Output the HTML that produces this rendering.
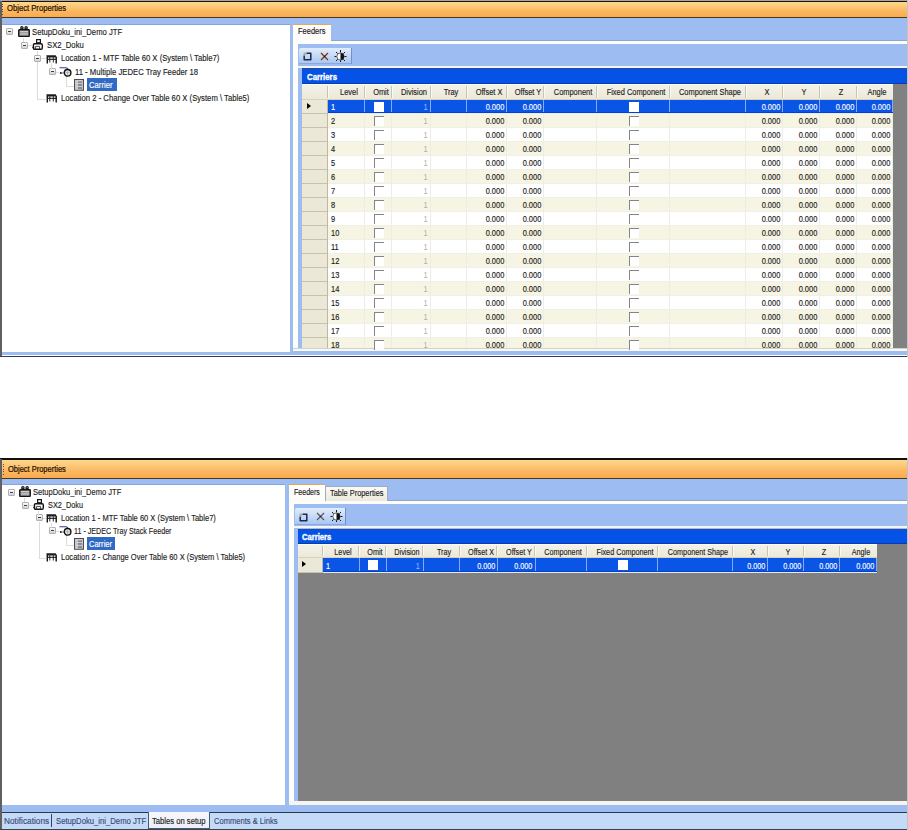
<!DOCTYPE html><html><head><meta charset="utf-8"><style>
*{margin:0;padding:0;box-sizing:content-box}
html,body{width:908px;height:830px;overflow:hidden;background:#fff}
body{position:relative;font-family:"Liberation Sans", sans-serif}
div,span{position:absolute}
svg{position:absolute;left:0;top:0;overflow:visible}
.t{white-space:nowrap;-webkit-text-stroke:0.14px currentColor}
</style></head><body><div style="left:0px;top:0px;width:907px;height:1px;background:#a9a6a6"></div>
<div style="left:0px;top:1px;width:2px;height:356px;background:#606062"></div>
<div style="left:2px;top:1px;width:905px;height:1px;background:#1c1408"></div>
<div style="left:2px;top:2px;width:905px;height:15px;background:linear-gradient(#fdd88c,#fcc878 30%,#fbb862 60%,#fbaa4e)"></div>
<div style="left:2px;top:4.0px;width:1px;height:1px;background:#6a5030"></div>
<div style="left:2px;top:6.4px;width:1px;height:1px;background:#6a5030"></div>
<div style="left:2px;top:8.8px;width:1px;height:1px;background:#6a5030"></div>
<div style="left:2px;top:11.2px;width:1px;height:1px;background:#6a5030"></div>
<div style="left:2px;top:13.6px;width:1px;height:1px;background:#6a5030"></div>
<span class="t" style="left:6.80px;top:3.00px;font-size:8.5px;line-height:10px;color:#1e1200;transform:scaleX(0.9);transform-origin:0 0;-webkit-text-stroke:0.22px #1e1200">Object Properties</span>
<div style="left:2px;top:17px;width:905px;height:1px;background:#4a3a22"></div>
<div style="left:2px;top:18px;width:905px;height:337px;background:#9dbdf2"></div>
<div style="left:0px;top:355.5px;width:907px;height:1.5px;background:#343c52"></div>
<div style="left:2px;top:25px;width:288px;height:327px;background:#fff"></div>
<div style="left:2px;top:24px;width:288px;height:1px;background:#86a4d6"></div>
<div style="left:6.3px;top:28.299999999999997px;width:5px;height:5px;border:1px solid #b0b0b4;border-radius:1px;background:linear-gradient(#fcfcfc,#d4d4d8)"><div style="left:1px;top:2px;width:3px;height:1px;background:#3c3c48"></div></div>
<div style="left:17.8px;top:25.999999999999996px;width:12px;height:11px"><svg width="12" height="11" viewBox="0 0 12 11"><circle cx="3.9" cy="1.9" r="1.8" fill="#1a1a1a"/><circle cx="8.1" cy="1.9" r="1.8" fill="#1a1a1a"/><circle cx="3.9" cy="1.6" r="0.6" fill="#999"/><circle cx="8.1" cy="1.6" r="0.6" fill="#999"/><rect x="0.75" y="3.75" width="10.5" height="6.6" rx="0.6" fill="#9a9a9a" stroke="#141414" stroke-width="1.4"/><path d="M2 5.6 H10 M2 8 H10" stroke="#d8d8d8" stroke-width="0.9"/></svg></div>
<span class="t" style="left:32.40px;top:27.00px;font-size:8.5px;line-height:10px;color:#1c1c1c;transform:scaleX(0.905);transform-origin:0 0;">SetupDoku_ini_Demo JTF</span>
<div style="left:20.5px;top:41.559999999999995px;width:5px;height:5px;border:1px solid #b0b0b4;border-radius:1px;background:linear-gradient(#fcfcfc,#d4d4d8)"><div style="left:1px;top:2px;width:3px;height:1px;background:#3c3c48"></div></div>
<div style="left:32.4px;top:39.059999999999995px;width:11px;height:11px"><svg width="11" height="11" viewBox="0 0 11 11"><rect x="4.6" y="0.6" width="3.8" height="3.2" fill="#fff" stroke="#151515" stroke-width="1.2"/><path d="M6.5 3.5 V5" stroke="#151515" stroke-width="1.2"/><rect x="1.4" y="4.7" width="8.9" height="5.6" rx="1.2" fill="#fff" stroke="#151515" stroke-width="1.4"/><path d="M3.6 10 V7.4 H7.6 V10" fill="none" stroke="#333" stroke-width="0.9"/><path d="M0 8.6 L2.2 7 V10.2Z" fill="#151515"/></svg></div>
<span class="t" style="left:47.00px;top:40.00px;font-size:8.5px;line-height:10px;color:#1c1c1c;transform:scaleX(0.905);transform-origin:0 0;">SX2_Doku</span>
<div style="left:34.3px;top:54.81999999999999px;width:5px;height:5px;border:1px solid #b0b0b4;border-radius:1px;background:linear-gradient(#fcfcfc,#d4d4d8)"><div style="left:1px;top:2px;width:3px;height:1px;background:#3c3c48"></div></div>
<div style="left:45.9px;top:54.519999999999996px;width:12px;height:9px"><svg width="12" height="9" viewBox="0 0 12 9"><path d="M0.3 0.3 H9.6 L11 2.5 H0.8Z" fill="#1c1c1c"/><path d="M1.3 2 V8.5 M10.2 2 V8.5" stroke="#151515" stroke-width="1.4"/><path d="M3.8 2.2 V7.5 M7.3 2.2 V7.5" stroke="#2a2a2a" stroke-width="1"/><path d="M1.3 4.3 H10.2" stroke="#151515" stroke-width="1.1"/></svg></div>
<span class="t" style="left:60.80px;top:53.00px;font-size:8.5px;line-height:10px;color:#1c1c1c;transform:scaleX(0.905);transform-origin:0 0;">Location 1 - MTF Table 60 X (System \ Table7)</span>
<div style="left:48.9px;top:68.08px;width:5px;height:5px;border:1px solid #b0b0b4;border-radius:1px;background:linear-gradient(#fcfcfc,#d4d4d8)"><div style="left:1px;top:2px;width:3px;height:1px;background:#3c3c48"></div></div>
<div style="left:58.8px;top:67.08px;width:13px;height:10px"><svg width="13" height="10" viewBox="0 0 13 10"><path d="M0.5 0.8 H6.5 Q8 0.8 8.8 2" fill="none" stroke="#2a3a88" stroke-width="1.1"/><circle cx="1.8" cy="6" r="1" fill="#151515"/><path d="M2.5 6 H5" stroke="#555" stroke-width="0.8"/><circle cx="8.6" cy="5.8" r="3.3" fill="#eee" stroke="#111" stroke-width="1.4"/><path d="M8.6 3.6 V8 M6.4 5.8 H10.8" stroke="#888" stroke-width="0.6"/></svg></div>
<span class="t" style="left:74.60px;top:67.00px;font-size:8.5px;line-height:10px;color:#1c1c1c;transform:scaleX(0.905);transform-origin:0 0;">11 - Multiple JEDEC Tray Feeder 18</span>
<div style="left:74.1px;top:79.34px;width:10px;height:12px"><svg width="10" height="12" viewBox="0 0 10 12"><rect x="0.6" y="0.6" width="8.8" height="10.6" fill="#f2f2f2" stroke="#4c4c4c" stroke-width="1.2"/><rect x="1.2" y="1.2" width="2" height="9.4" fill="#c8c8c8"/><rect x="3.6" y="2.2" width="4.6" height="2.2" fill="#8a8a98"/><rect x="3.6" y="5" width="4.6" height="2.2" fill="#8a8a98"/><rect x="3.6" y="7.8" width="4.6" height="2.2" fill="#8a8a98"/></svg></div>
<div style="left:87px;top:78.34px;width:29.5px;height:13px;background:#316ac5"></div>
<span class="t" style="left:89.00px;top:80.00px;font-size:8.5px;line-height:10px;color:#fff;transform:scaleX(0.905);transform-origin:0 0;">Carrier</span>
<div style="left:45.9px;top:94.3px;width:12px;height:9px"><svg width="12" height="9" viewBox="0 0 12 9"><path d="M0.3 0.3 H9.6 L11 2.5 H0.8Z" fill="#1c1c1c"/><path d="M1.3 2 V8.5 M10.2 2 V8.5" stroke="#151515" stroke-width="1.4"/><path d="M3.8 2.2 V7.5 M7.3 2.2 V7.5" stroke="#2a2a2a" stroke-width="1"/><path d="M1.3 4.3 H10.2" stroke="#151515" stroke-width="1.1"/></svg></div>
<span class="t" style="left:60.80px;top:93.00px;font-size:8.5px;line-height:10px;color:#1c1c1c;transform:scaleX(0.905);transform-origin:0 0;">Location 2 - Change Over Table 60 X (System \ Table5)</span>
<div style="left:23.3px;top:37.5px;width:1px;height:4.0px;background:#dcdcdc"></div>
<div style="left:27.5px;top:45px;width:4.899999999999999px;height:1px;background:#dcdcdc"></div>
<div style="left:37.4px;top:50.5px;width:1px;height:4.0px;background:#dcdcdc"></div>
<div style="left:37.3px;top:61.5px;width:1px;height:37.5px;background:#dcdcdc"></div>
<div style="left:41.3px;top:58px;width:4.600000000000001px;height:1px;background:#dcdcdc"></div>
<div style="left:37.3px;top:99px;width:8.600000000000001px;height:1px;background:#dcdcdc"></div>
<div style="left:51.4px;top:62.5px;width:1px;height:6.0px;background:#dcdcdc"></div>
<div style="left:55.9px;top:72px;width:2.8999999999999986px;height:1px;background:#dcdcdc"></div>
<div style="left:65.8px;top:76.5px;width:1px;height:9.5px;background:#dcdcdc"></div>
<div style="left:65.8px;top:86px;width:8.299999999999997px;height:1px;background:#dcdcdc"></div>
<div style="left:293px;top:24px;width:38px;height:17px;background:linear-gradient(#fff,#fcfbf7);border-top:1px solid #eaa84e;box-sizing:border-box"></div>
<span class="t" style="left:297.80px;top:26.00px;font-size:8.5px;line-height:10px;color:#1a1a1a;transform:scaleX(0.88);transform-origin:0 0;">Feeders</span>
<div style="left:331px;top:39.5px;width:576px;height:1.5px;background:#8ea6cc"></div>
<div style="left:293px;top:41px;width:614px;height:3px;background:#fdfdfb"></div>
<div style="left:293px;top:41px;width:5px;height:309px;background:#fdfdfb"></div>
<div style="left:293px;top:348px;width:614px;height:3px;background:linear-gradient(#d4d2c8 0,#d4d2c8 1px,#f8f8f4 1px)"></div>
<div style="left:298.5px;top:47.5px;width:53px;height:16.7px;background:linear-gradient(#e2ecfc,#c2d6f6 60%,#aac6f2);border-right:1px solid #6f8fcf;border-bottom:1px solid #8aa8dc;border-top-left-radius:2px;box-sizing:border-box"></div>
<div style="left:303.0px;top:52.3px;width:9px;height:9px"><svg width="9" height="9" viewBox="0 0 9 9"><path d="M1.2 3.5 V7.8 H7.8 V1.2 H3.5" fill="none" stroke="#1c2a48" stroke-width="1.5" stroke-linejoin="round"/><path d="M0.5 0.5 H3.2 V3.2 H0.5Z" fill="#a8b4a0"/></svg></div>
<div style="left:320.0px;top:52.0px;width:9px;height:9px"><svg width="9" height="9" viewBox="0 0 9 9"><path d="M1 1 L8 8 M8 1 L1 8" stroke="#7a3818" stroke-width="1.3"/><circle cx="4.5" cy="4.5" r="0.8" fill="#3a1808"/></svg></div>
<div style="left:333.7px;top:49.7px;width:12px;height:12px"><svg width="12" height="12" viewBox="0 0 12 12"><path d="M6.5 0 V2.2 M6.5 10.3 V12 M0.5 6.5 H2.5 M10.5 6.5 H12.5 M2 2 L3.6 3.6 M9.4 9.4 L11 11 M11 2 L9.4 3.6 M3.6 9.4 L2 11" stroke="#15151f" stroke-width="1"/><circle cx="6.5" cy="6.5" r="3.6" fill="#fff" stroke="#111" stroke-width="0.6"/><path d="M6.5 2.9 A3.6 3.6 0 0 1 6.5 10.1Z" fill="#111"/></svg></div>
<div style="left:298px;top:65.7px;width:609px;height:2.3px;background:#f2f6fc"></div>
<div style="left:302px;top:68px;width:605px;height:16px;background:#0553e6"></div>
<div style="left:302px;top:68px;width:605px;height:1px;background:#2a4a9a"></div>
<div style="left:302px;top:83px;width:605px;height:1px;background:#0a3cb0"></div>
<span class="t" style="left:306.50px;top:72.00px;font-size:8.5px;line-height:10px;color:#fff;transform:scaleX(0.92);transform-origin:0 0;font-weight:bold;-webkit-text-stroke:0.35px #fff">Carriers</span>
<div style="left:302px;top:84px;width:591px;height:15.5px;background:linear-gradient(#f4f2e8,#ebe8d8);border-top:1px solid #fbfaf4;box-sizing:border-box"></div>
<div style="left:326.5px;top:86px;width:1px;height:11.5px;background:#c9c4ae"></div>
<div style="left:327.5px;top:86px;width:1px;height:11.5px;background:#faf9f2"></div>
<div style="left:363.5px;top:86px;width:1px;height:11.5px;background:#c9c4ae"></div>
<div style="left:364.5px;top:86px;width:1px;height:11.5px;background:#faf9f2"></div>
<span class="t" style="left:248.50px;width:200px;text-align:center;top:87.00px;font-size:8.5px;line-height:10px;color:#1c1c1c;transform:scaleX(0.875);transform-origin:50% 0;">Level</span>
<div style="left:390.5px;top:86px;width:1px;height:11.5px;background:#c9c4ae"></div>
<div style="left:391.5px;top:86px;width:1px;height:11.5px;background:#faf9f2"></div>
<span class="t" style="left:280.50px;width:200px;text-align:center;top:87.00px;font-size:8.5px;line-height:10px;color:#1c1c1c;transform:scaleX(0.875);transform-origin:50% 0;">Omit</span>
<div style="left:429.5px;top:86px;width:1px;height:11.5px;background:#c9c4ae"></div>
<div style="left:430.5px;top:86px;width:1px;height:11.5px;background:#faf9f2"></div>
<span class="t" style="left:313.50px;width:200px;text-align:center;top:87.00px;font-size:8.5px;line-height:10px;color:#1c1c1c;transform:scaleX(0.875);transform-origin:50% 0;">Division</span>
<div style="left:465.5px;top:86px;width:1px;height:11.5px;background:#c9c4ae"></div>
<div style="left:466.5px;top:86px;width:1px;height:11.5px;background:#faf9f2"></div>
<span class="t" style="left:351.00px;width:200px;text-align:center;top:87.00px;font-size:8.5px;line-height:10px;color:#1c1c1c;transform:scaleX(0.875);transform-origin:50% 0;">Tray</span>
<div style="left:505.5px;top:86px;width:1px;height:11.5px;background:#c9c4ae"></div>
<div style="left:506.5px;top:86px;width:1px;height:11.5px;background:#faf9f2"></div>
<span class="t" style="left:389.00px;width:200px;text-align:center;top:87.00px;font-size:8.5px;line-height:10px;color:#1c1c1c;transform:scaleX(0.875);transform-origin:50% 0;">Offset X</span>
<div style="left:542.5px;top:86px;width:1px;height:11.5px;background:#c9c4ae"></div>
<div style="left:543.5px;top:86px;width:1px;height:11.5px;background:#faf9f2"></div>
<span class="t" style="left:427.50px;width:200px;text-align:center;top:87.00px;font-size:8.5px;line-height:10px;color:#1c1c1c;transform:scaleX(0.875);transform-origin:50% 0;">Offset Y</span>
<div style="left:595.5px;top:86px;width:1px;height:11.5px;background:#c9c4ae"></div>
<div style="left:596.5px;top:86px;width:1px;height:11.5px;background:#faf9f2"></div>
<span class="t" style="left:472.50px;width:200px;text-align:center;top:87.00px;font-size:8.5px;line-height:10px;color:#1c1c1c;transform:scaleX(0.875);transform-origin:50% 0;">Component</span>
<div style="left:668.5px;top:86px;width:1px;height:11.5px;background:#c9c4ae"></div>
<div style="left:669.5px;top:86px;width:1px;height:11.5px;background:#faf9f2"></div>
<span class="t" style="left:535.50px;width:200px;text-align:center;top:87.00px;font-size:8.5px;line-height:10px;color:#1c1c1c;transform:scaleX(0.875);transform-origin:50% 0;">Fixed Component</span>
<div style="left:744.5px;top:86px;width:1px;height:11.5px;background:#c9c4ae"></div>
<div style="left:745.5px;top:86px;width:1px;height:11.5px;background:#faf9f2"></div>
<span class="t" style="left:610.00px;width:200px;text-align:center;top:87.00px;font-size:8.5px;line-height:10px;color:#1c1c1c;transform:scaleX(0.875);transform-origin:50% 0;">Component Shape</span>
<div style="left:781.5px;top:86px;width:1px;height:11.5px;background:#c9c4ae"></div>
<div style="left:782.5px;top:86px;width:1px;height:11.5px;background:#faf9f2"></div>
<span class="t" style="left:666.50px;width:200px;text-align:center;top:87.00px;font-size:8.5px;line-height:10px;color:#1c1c1c;transform:scaleX(0.875);transform-origin:50% 0;">X</span>
<div style="left:818.5px;top:86px;width:1px;height:11.5px;background:#c9c4ae"></div>
<div style="left:819.5px;top:86px;width:1px;height:11.5px;background:#faf9f2"></div>
<span class="t" style="left:703.50px;width:200px;text-align:center;top:87.00px;font-size:8.5px;line-height:10px;color:#1c1c1c;transform:scaleX(0.875);transform-origin:50% 0;">Y</span>
<div style="left:855.5px;top:86px;width:1px;height:11.5px;background:#c9c4ae"></div>
<div style="left:856.5px;top:86px;width:1px;height:11.5px;background:#faf9f2"></div>
<span class="t" style="left:740.50px;width:200px;text-align:center;top:87.00px;font-size:8.5px;line-height:10px;color:#1c1c1c;transform:scaleX(0.875);transform-origin:50% 0;">Z</span>
<span class="t" style="left:777.00px;width:200px;text-align:center;top:87.00px;font-size:8.5px;line-height:10px;color:#1c1c1c;transform:scaleX(0.875);transform-origin:50% 0;">Angle</span>
<div style="left:302px;top:98.5px;width:591px;height:1px;background:#d6d2bc"></div>
<div style="left:302px;top:99.5px;width:26px;height:14px;background:#ebe8d8"></div>
<div style="left:302px;top:112.5px;width:26px;height:1px;background:#c6c2ac"></div>
<div style="left:327px;top:99.5px;width:1px;height:14px;background:#bcb8a4"></div>
<div style="left:306.5px;top:102.5px;width:0;height:0;border-left:4px solid #000;border-top:3.5px solid transparent;border-bottom:3.5px solid transparent"></div>
<div style="left:328px;top:99.5px;width:565px;height:14px;background:#0a54e6"></div>
<div style="left:364px;top:99.5px;width:1px;height:14px;background:#84acf4"></div>
<div style="left:391px;top:99.5px;width:1px;height:14px;background:#84acf4"></div>
<div style="left:430px;top:99.5px;width:1px;height:14px;background:#84acf4"></div>
<div style="left:466px;top:99.5px;width:1px;height:14px;background:#84acf4"></div>
<div style="left:506px;top:99.5px;width:1px;height:14px;background:#84acf4"></div>
<div style="left:543px;top:99.5px;width:1px;height:14px;background:#84acf4"></div>
<div style="left:596px;top:99.5px;width:1px;height:14px;background:#84acf4"></div>
<div style="left:669px;top:99.5px;width:1px;height:14px;background:#84acf4"></div>
<div style="left:745px;top:99.5px;width:1px;height:14px;background:#84acf4"></div>
<div style="left:782px;top:99.5px;width:1px;height:14px;background:#84acf4"></div>
<div style="left:819px;top:99.5px;width:1px;height:14px;background:#84acf4"></div>
<div style="left:856px;top:99.5px;width:1px;height:14px;background:#84acf4"></div>
<div style="left:892px;top:99.5px;width:1px;height:14px;background:#84acf4"></div>
<div style="left:328px;top:111.5px;width:565px;height:1px;background:#0842c4"></div>
<div style="left:328px;top:112.5px;width:565px;height:1px;background:#e4ecfc"></div>
<span class="t" style="left:330.50px;top:102.00px;font-size:8.5px;line-height:10px;color:#fff;transform:scaleX(0.875);transform-origin:0 0;">1</span>
<div style="left:373.5px;top:101.5px;width:10px;height:10px;background:#fff"></div>
<span class="t" style="right:480.50px;top:102.00px;font-size:8.5px;line-height:10px;color:#9cb8f0;transform:scaleX(0.875);transform-origin:100% 0;-webkit-text-stroke:0">1</span>
<span class="t" style="right:404.00px;top:102.00px;font-size:8.5px;line-height:10px;color:#fff;transform:scaleX(0.875);transform-origin:100% 0;">0.000</span>
<span class="t" style="right:367.00px;top:102.00px;font-size:8.5px;line-height:10px;color:#fff;transform:scaleX(0.875);transform-origin:100% 0;">0.000</span>
<div style="left:628.5px;top:101.5px;width:10px;height:10px;background:#fff"></div>
<span class="t" style="right:128.00px;top:102.00px;font-size:8.5px;line-height:10px;color:#fff;transform:scaleX(0.875);transform-origin:100% 0;">0.000</span>
<span class="t" style="right:91.00px;top:102.00px;font-size:8.5px;line-height:10px;color:#fff;transform:scaleX(0.875);transform-origin:100% 0;">0.000</span>
<span class="t" style="right:54.00px;top:102.00px;font-size:8.5px;line-height:10px;color:#fff;transform:scaleX(0.875);transform-origin:100% 0;">0.000</span>
<span class="t" style="right:18.00px;top:102.00px;font-size:8.5px;line-height:10px;color:#fff;transform:scaleX(0.875);transform-origin:100% 0;">0.000</span>
<div style="left:302px;top:113.5px;width:26px;height:14px;background:#ebe8d8"></div>
<div style="left:302px;top:126.5px;width:26px;height:1px;background:#c6c2ac"></div>
<div style="left:327px;top:113.5px;width:1px;height:14px;background:#bcb8a4"></div>
<div style="left:328px;top:113.5px;width:565px;height:14px;background:#f6f4e2"></div>
<div style="left:364px;top:113.5px;width:1px;height:14px;background:#efede2"></div>
<div style="left:391px;top:113.5px;width:1px;height:14px;background:#efede2"></div>
<div style="left:430px;top:113.5px;width:1px;height:14px;background:#efede2"></div>
<div style="left:466px;top:113.5px;width:1px;height:14px;background:#efede2"></div>
<div style="left:506px;top:113.5px;width:1px;height:14px;background:#efede2"></div>
<div style="left:543px;top:113.5px;width:1px;height:14px;background:#efede2"></div>
<div style="left:596px;top:113.5px;width:1px;height:14px;background:#efede2"></div>
<div style="left:669px;top:113.5px;width:1px;height:14px;background:#efede2"></div>
<div style="left:745px;top:113.5px;width:1px;height:14px;background:#efede2"></div>
<div style="left:782px;top:113.5px;width:1px;height:14px;background:#efede2"></div>
<div style="left:819px;top:113.5px;width:1px;height:14px;background:#efede2"></div>
<div style="left:856px;top:113.5px;width:1px;height:14px;background:#efede2"></div>
<div style="left:892px;top:113.5px;width:1px;height:14px;background:#efede2"></div>
<div style="left:328px;top:126.5px;width:565px;height:1px;background:#f2f0e6"></div>
<span class="t" style="left:330.50px;top:116.00px;font-size:8.5px;line-height:10px;color:#1a1a1a;transform:scaleX(0.875);transform-origin:0 0;">2</span>
<div style="left:373.5px;top:115.5px;width:10px;height:10px;border-left:1.6px solid #858585;border-top:1.6px solid #858585;box-sizing:border-box;background:#fff"></div>
<span class="t" style="right:480.50px;top:116.00px;font-size:8.5px;line-height:10px;color:#b0b0b0;transform:scaleX(0.875);transform-origin:100% 0;-webkit-text-stroke:0">1</span>
<span class="t" style="right:404.00px;top:116.00px;font-size:8.5px;line-height:10px;color:#1a1a1a;transform:scaleX(0.875);transform-origin:100% 0;">0.000</span>
<span class="t" style="right:367.00px;top:116.00px;font-size:8.5px;line-height:10px;color:#1a1a1a;transform:scaleX(0.875);transform-origin:100% 0;">0.000</span>
<div style="left:628.5px;top:115.5px;width:10px;height:10px;border-left:1.6px solid #858585;border-top:1.6px solid #858585;box-sizing:border-box;background:#fff"></div>
<span class="t" style="right:128.00px;top:116.00px;font-size:8.5px;line-height:10px;color:#1a1a1a;transform:scaleX(0.875);transform-origin:100% 0;">0.000</span>
<span class="t" style="right:91.00px;top:116.00px;font-size:8.5px;line-height:10px;color:#1a1a1a;transform:scaleX(0.875);transform-origin:100% 0;">0.000</span>
<span class="t" style="right:54.00px;top:116.00px;font-size:8.5px;line-height:10px;color:#1a1a1a;transform:scaleX(0.875);transform-origin:100% 0;">0.000</span>
<span class="t" style="right:18.00px;top:116.00px;font-size:8.5px;line-height:10px;color:#1a1a1a;transform:scaleX(0.875);transform-origin:100% 0;">0.000</span>
<div style="left:302px;top:127.5px;width:26px;height:14px;background:#ebe8d8"></div>
<div style="left:302px;top:140.5px;width:26px;height:1px;background:#c6c2ac"></div>
<div style="left:327px;top:127.5px;width:1px;height:14px;background:#bcb8a4"></div>
<div style="left:328px;top:127.5px;width:565px;height:14px;background:#ffffff"></div>
<div style="left:364px;top:127.5px;width:1px;height:14px;background:#efede2"></div>
<div style="left:391px;top:127.5px;width:1px;height:14px;background:#efede2"></div>
<div style="left:430px;top:127.5px;width:1px;height:14px;background:#efede2"></div>
<div style="left:466px;top:127.5px;width:1px;height:14px;background:#efede2"></div>
<div style="left:506px;top:127.5px;width:1px;height:14px;background:#efede2"></div>
<div style="left:543px;top:127.5px;width:1px;height:14px;background:#efede2"></div>
<div style="left:596px;top:127.5px;width:1px;height:14px;background:#efede2"></div>
<div style="left:669px;top:127.5px;width:1px;height:14px;background:#efede2"></div>
<div style="left:745px;top:127.5px;width:1px;height:14px;background:#efede2"></div>
<div style="left:782px;top:127.5px;width:1px;height:14px;background:#efede2"></div>
<div style="left:819px;top:127.5px;width:1px;height:14px;background:#efede2"></div>
<div style="left:856px;top:127.5px;width:1px;height:14px;background:#efede2"></div>
<div style="left:892px;top:127.5px;width:1px;height:14px;background:#efede2"></div>
<div style="left:328px;top:140.5px;width:565px;height:1px;background:#f2f0e6"></div>
<span class="t" style="left:330.50px;top:130.00px;font-size:8.5px;line-height:10px;color:#1a1a1a;transform:scaleX(0.875);transform-origin:0 0;">3</span>
<div style="left:373.5px;top:129.5px;width:10px;height:10px;border-left:1.6px solid #858585;border-top:1.6px solid #858585;box-sizing:border-box;background:#fff"></div>
<span class="t" style="right:480.50px;top:130.00px;font-size:8.5px;line-height:10px;color:#b0b0b0;transform:scaleX(0.875);transform-origin:100% 0;-webkit-text-stroke:0">1</span>
<span class="t" style="right:404.00px;top:130.00px;font-size:8.5px;line-height:10px;color:#1a1a1a;transform:scaleX(0.875);transform-origin:100% 0;">0.000</span>
<span class="t" style="right:367.00px;top:130.00px;font-size:8.5px;line-height:10px;color:#1a1a1a;transform:scaleX(0.875);transform-origin:100% 0;">0.000</span>
<div style="left:628.5px;top:129.5px;width:10px;height:10px;border-left:1.6px solid #858585;border-top:1.6px solid #858585;box-sizing:border-box;background:#fff"></div>
<span class="t" style="right:128.00px;top:130.00px;font-size:8.5px;line-height:10px;color:#1a1a1a;transform:scaleX(0.875);transform-origin:100% 0;">0.000</span>
<span class="t" style="right:91.00px;top:130.00px;font-size:8.5px;line-height:10px;color:#1a1a1a;transform:scaleX(0.875);transform-origin:100% 0;">0.000</span>
<span class="t" style="right:54.00px;top:130.00px;font-size:8.5px;line-height:10px;color:#1a1a1a;transform:scaleX(0.875);transform-origin:100% 0;">0.000</span>
<span class="t" style="right:18.00px;top:130.00px;font-size:8.5px;line-height:10px;color:#1a1a1a;transform:scaleX(0.875);transform-origin:100% 0;">0.000</span>
<div style="left:302px;top:141.5px;width:26px;height:14px;background:#ebe8d8"></div>
<div style="left:302px;top:154.5px;width:26px;height:1px;background:#c6c2ac"></div>
<div style="left:327px;top:141.5px;width:1px;height:14px;background:#bcb8a4"></div>
<div style="left:328px;top:141.5px;width:565px;height:14px;background:#f6f4e2"></div>
<div style="left:364px;top:141.5px;width:1px;height:14px;background:#efede2"></div>
<div style="left:391px;top:141.5px;width:1px;height:14px;background:#efede2"></div>
<div style="left:430px;top:141.5px;width:1px;height:14px;background:#efede2"></div>
<div style="left:466px;top:141.5px;width:1px;height:14px;background:#efede2"></div>
<div style="left:506px;top:141.5px;width:1px;height:14px;background:#efede2"></div>
<div style="left:543px;top:141.5px;width:1px;height:14px;background:#efede2"></div>
<div style="left:596px;top:141.5px;width:1px;height:14px;background:#efede2"></div>
<div style="left:669px;top:141.5px;width:1px;height:14px;background:#efede2"></div>
<div style="left:745px;top:141.5px;width:1px;height:14px;background:#efede2"></div>
<div style="left:782px;top:141.5px;width:1px;height:14px;background:#efede2"></div>
<div style="left:819px;top:141.5px;width:1px;height:14px;background:#efede2"></div>
<div style="left:856px;top:141.5px;width:1px;height:14px;background:#efede2"></div>
<div style="left:892px;top:141.5px;width:1px;height:14px;background:#efede2"></div>
<div style="left:328px;top:154.5px;width:565px;height:1px;background:#f2f0e6"></div>
<span class="t" style="left:330.50px;top:144.00px;font-size:8.5px;line-height:10px;color:#1a1a1a;transform:scaleX(0.875);transform-origin:0 0;">4</span>
<div style="left:373.5px;top:143.5px;width:10px;height:10px;border-left:1.6px solid #858585;border-top:1.6px solid #858585;box-sizing:border-box;background:#fff"></div>
<span class="t" style="right:480.50px;top:144.00px;font-size:8.5px;line-height:10px;color:#b0b0b0;transform:scaleX(0.875);transform-origin:100% 0;-webkit-text-stroke:0">1</span>
<span class="t" style="right:404.00px;top:144.00px;font-size:8.5px;line-height:10px;color:#1a1a1a;transform:scaleX(0.875);transform-origin:100% 0;">0.000</span>
<span class="t" style="right:367.00px;top:144.00px;font-size:8.5px;line-height:10px;color:#1a1a1a;transform:scaleX(0.875);transform-origin:100% 0;">0.000</span>
<div style="left:628.5px;top:143.5px;width:10px;height:10px;border-left:1.6px solid #858585;border-top:1.6px solid #858585;box-sizing:border-box;background:#fff"></div>
<span class="t" style="right:128.00px;top:144.00px;font-size:8.5px;line-height:10px;color:#1a1a1a;transform:scaleX(0.875);transform-origin:100% 0;">0.000</span>
<span class="t" style="right:91.00px;top:144.00px;font-size:8.5px;line-height:10px;color:#1a1a1a;transform:scaleX(0.875);transform-origin:100% 0;">0.000</span>
<span class="t" style="right:54.00px;top:144.00px;font-size:8.5px;line-height:10px;color:#1a1a1a;transform:scaleX(0.875);transform-origin:100% 0;">0.000</span>
<span class="t" style="right:18.00px;top:144.00px;font-size:8.5px;line-height:10px;color:#1a1a1a;transform:scaleX(0.875);transform-origin:100% 0;">0.000</span>
<div style="left:302px;top:155.5px;width:26px;height:14px;background:#ebe8d8"></div>
<div style="left:302px;top:168.5px;width:26px;height:1px;background:#c6c2ac"></div>
<div style="left:327px;top:155.5px;width:1px;height:14px;background:#bcb8a4"></div>
<div style="left:328px;top:155.5px;width:565px;height:14px;background:#ffffff"></div>
<div style="left:364px;top:155.5px;width:1px;height:14px;background:#efede2"></div>
<div style="left:391px;top:155.5px;width:1px;height:14px;background:#efede2"></div>
<div style="left:430px;top:155.5px;width:1px;height:14px;background:#efede2"></div>
<div style="left:466px;top:155.5px;width:1px;height:14px;background:#efede2"></div>
<div style="left:506px;top:155.5px;width:1px;height:14px;background:#efede2"></div>
<div style="left:543px;top:155.5px;width:1px;height:14px;background:#efede2"></div>
<div style="left:596px;top:155.5px;width:1px;height:14px;background:#efede2"></div>
<div style="left:669px;top:155.5px;width:1px;height:14px;background:#efede2"></div>
<div style="left:745px;top:155.5px;width:1px;height:14px;background:#efede2"></div>
<div style="left:782px;top:155.5px;width:1px;height:14px;background:#efede2"></div>
<div style="left:819px;top:155.5px;width:1px;height:14px;background:#efede2"></div>
<div style="left:856px;top:155.5px;width:1px;height:14px;background:#efede2"></div>
<div style="left:892px;top:155.5px;width:1px;height:14px;background:#efede2"></div>
<div style="left:328px;top:168.5px;width:565px;height:1px;background:#f2f0e6"></div>
<span class="t" style="left:330.50px;top:158.00px;font-size:8.5px;line-height:10px;color:#1a1a1a;transform:scaleX(0.875);transform-origin:0 0;">5</span>
<div style="left:373.5px;top:157.5px;width:10px;height:10px;border-left:1.6px solid #858585;border-top:1.6px solid #858585;box-sizing:border-box;background:#fff"></div>
<span class="t" style="right:480.50px;top:158.00px;font-size:8.5px;line-height:10px;color:#b0b0b0;transform:scaleX(0.875);transform-origin:100% 0;-webkit-text-stroke:0">1</span>
<span class="t" style="right:404.00px;top:158.00px;font-size:8.5px;line-height:10px;color:#1a1a1a;transform:scaleX(0.875);transform-origin:100% 0;">0.000</span>
<span class="t" style="right:367.00px;top:158.00px;font-size:8.5px;line-height:10px;color:#1a1a1a;transform:scaleX(0.875);transform-origin:100% 0;">0.000</span>
<div style="left:628.5px;top:157.5px;width:10px;height:10px;border-left:1.6px solid #858585;border-top:1.6px solid #858585;box-sizing:border-box;background:#fff"></div>
<span class="t" style="right:128.00px;top:158.00px;font-size:8.5px;line-height:10px;color:#1a1a1a;transform:scaleX(0.875);transform-origin:100% 0;">0.000</span>
<span class="t" style="right:91.00px;top:158.00px;font-size:8.5px;line-height:10px;color:#1a1a1a;transform:scaleX(0.875);transform-origin:100% 0;">0.000</span>
<span class="t" style="right:54.00px;top:158.00px;font-size:8.5px;line-height:10px;color:#1a1a1a;transform:scaleX(0.875);transform-origin:100% 0;">0.000</span>
<span class="t" style="right:18.00px;top:158.00px;font-size:8.5px;line-height:10px;color:#1a1a1a;transform:scaleX(0.875);transform-origin:100% 0;">0.000</span>
<div style="left:302px;top:169.5px;width:26px;height:14px;background:#ebe8d8"></div>
<div style="left:302px;top:182.5px;width:26px;height:1px;background:#c6c2ac"></div>
<div style="left:327px;top:169.5px;width:1px;height:14px;background:#bcb8a4"></div>
<div style="left:328px;top:169.5px;width:565px;height:14px;background:#f6f4e2"></div>
<div style="left:364px;top:169.5px;width:1px;height:14px;background:#efede2"></div>
<div style="left:391px;top:169.5px;width:1px;height:14px;background:#efede2"></div>
<div style="left:430px;top:169.5px;width:1px;height:14px;background:#efede2"></div>
<div style="left:466px;top:169.5px;width:1px;height:14px;background:#efede2"></div>
<div style="left:506px;top:169.5px;width:1px;height:14px;background:#efede2"></div>
<div style="left:543px;top:169.5px;width:1px;height:14px;background:#efede2"></div>
<div style="left:596px;top:169.5px;width:1px;height:14px;background:#efede2"></div>
<div style="left:669px;top:169.5px;width:1px;height:14px;background:#efede2"></div>
<div style="left:745px;top:169.5px;width:1px;height:14px;background:#efede2"></div>
<div style="left:782px;top:169.5px;width:1px;height:14px;background:#efede2"></div>
<div style="left:819px;top:169.5px;width:1px;height:14px;background:#efede2"></div>
<div style="left:856px;top:169.5px;width:1px;height:14px;background:#efede2"></div>
<div style="left:892px;top:169.5px;width:1px;height:14px;background:#efede2"></div>
<div style="left:328px;top:182.5px;width:565px;height:1px;background:#f2f0e6"></div>
<span class="t" style="left:330.50px;top:172.00px;font-size:8.5px;line-height:10px;color:#1a1a1a;transform:scaleX(0.875);transform-origin:0 0;">6</span>
<div style="left:373.5px;top:171.5px;width:10px;height:10px;border-left:1.6px solid #858585;border-top:1.6px solid #858585;box-sizing:border-box;background:#fff"></div>
<span class="t" style="right:480.50px;top:172.00px;font-size:8.5px;line-height:10px;color:#b0b0b0;transform:scaleX(0.875);transform-origin:100% 0;-webkit-text-stroke:0">1</span>
<span class="t" style="right:404.00px;top:172.00px;font-size:8.5px;line-height:10px;color:#1a1a1a;transform:scaleX(0.875);transform-origin:100% 0;">0.000</span>
<span class="t" style="right:367.00px;top:172.00px;font-size:8.5px;line-height:10px;color:#1a1a1a;transform:scaleX(0.875);transform-origin:100% 0;">0.000</span>
<div style="left:628.5px;top:171.5px;width:10px;height:10px;border-left:1.6px solid #858585;border-top:1.6px solid #858585;box-sizing:border-box;background:#fff"></div>
<span class="t" style="right:128.00px;top:172.00px;font-size:8.5px;line-height:10px;color:#1a1a1a;transform:scaleX(0.875);transform-origin:100% 0;">0.000</span>
<span class="t" style="right:91.00px;top:172.00px;font-size:8.5px;line-height:10px;color:#1a1a1a;transform:scaleX(0.875);transform-origin:100% 0;">0.000</span>
<span class="t" style="right:54.00px;top:172.00px;font-size:8.5px;line-height:10px;color:#1a1a1a;transform:scaleX(0.875);transform-origin:100% 0;">0.000</span>
<span class="t" style="right:18.00px;top:172.00px;font-size:8.5px;line-height:10px;color:#1a1a1a;transform:scaleX(0.875);transform-origin:100% 0;">0.000</span>
<div style="left:302px;top:183.5px;width:26px;height:14px;background:#ebe8d8"></div>
<div style="left:302px;top:196.5px;width:26px;height:1px;background:#c6c2ac"></div>
<div style="left:327px;top:183.5px;width:1px;height:14px;background:#bcb8a4"></div>
<div style="left:328px;top:183.5px;width:565px;height:14px;background:#ffffff"></div>
<div style="left:364px;top:183.5px;width:1px;height:14px;background:#efede2"></div>
<div style="left:391px;top:183.5px;width:1px;height:14px;background:#efede2"></div>
<div style="left:430px;top:183.5px;width:1px;height:14px;background:#efede2"></div>
<div style="left:466px;top:183.5px;width:1px;height:14px;background:#efede2"></div>
<div style="left:506px;top:183.5px;width:1px;height:14px;background:#efede2"></div>
<div style="left:543px;top:183.5px;width:1px;height:14px;background:#efede2"></div>
<div style="left:596px;top:183.5px;width:1px;height:14px;background:#efede2"></div>
<div style="left:669px;top:183.5px;width:1px;height:14px;background:#efede2"></div>
<div style="left:745px;top:183.5px;width:1px;height:14px;background:#efede2"></div>
<div style="left:782px;top:183.5px;width:1px;height:14px;background:#efede2"></div>
<div style="left:819px;top:183.5px;width:1px;height:14px;background:#efede2"></div>
<div style="left:856px;top:183.5px;width:1px;height:14px;background:#efede2"></div>
<div style="left:892px;top:183.5px;width:1px;height:14px;background:#efede2"></div>
<div style="left:328px;top:196.5px;width:565px;height:1px;background:#f2f0e6"></div>
<span class="t" style="left:330.50px;top:186.00px;font-size:8.5px;line-height:10px;color:#1a1a1a;transform:scaleX(0.875);transform-origin:0 0;">7</span>
<div style="left:373.5px;top:185.5px;width:10px;height:10px;border-left:1.6px solid #858585;border-top:1.6px solid #858585;box-sizing:border-box;background:#fff"></div>
<span class="t" style="right:480.50px;top:186.00px;font-size:8.5px;line-height:10px;color:#b0b0b0;transform:scaleX(0.875);transform-origin:100% 0;-webkit-text-stroke:0">1</span>
<span class="t" style="right:404.00px;top:186.00px;font-size:8.5px;line-height:10px;color:#1a1a1a;transform:scaleX(0.875);transform-origin:100% 0;">0.000</span>
<span class="t" style="right:367.00px;top:186.00px;font-size:8.5px;line-height:10px;color:#1a1a1a;transform:scaleX(0.875);transform-origin:100% 0;">0.000</span>
<div style="left:628.5px;top:185.5px;width:10px;height:10px;border-left:1.6px solid #858585;border-top:1.6px solid #858585;box-sizing:border-box;background:#fff"></div>
<span class="t" style="right:128.00px;top:186.00px;font-size:8.5px;line-height:10px;color:#1a1a1a;transform:scaleX(0.875);transform-origin:100% 0;">0.000</span>
<span class="t" style="right:91.00px;top:186.00px;font-size:8.5px;line-height:10px;color:#1a1a1a;transform:scaleX(0.875);transform-origin:100% 0;">0.000</span>
<span class="t" style="right:54.00px;top:186.00px;font-size:8.5px;line-height:10px;color:#1a1a1a;transform:scaleX(0.875);transform-origin:100% 0;">0.000</span>
<span class="t" style="right:18.00px;top:186.00px;font-size:8.5px;line-height:10px;color:#1a1a1a;transform:scaleX(0.875);transform-origin:100% 0;">0.000</span>
<div style="left:302px;top:197.5px;width:26px;height:14px;background:#ebe8d8"></div>
<div style="left:302px;top:210.5px;width:26px;height:1px;background:#c6c2ac"></div>
<div style="left:327px;top:197.5px;width:1px;height:14px;background:#bcb8a4"></div>
<div style="left:328px;top:197.5px;width:565px;height:14px;background:#f6f4e2"></div>
<div style="left:364px;top:197.5px;width:1px;height:14px;background:#efede2"></div>
<div style="left:391px;top:197.5px;width:1px;height:14px;background:#efede2"></div>
<div style="left:430px;top:197.5px;width:1px;height:14px;background:#efede2"></div>
<div style="left:466px;top:197.5px;width:1px;height:14px;background:#efede2"></div>
<div style="left:506px;top:197.5px;width:1px;height:14px;background:#efede2"></div>
<div style="left:543px;top:197.5px;width:1px;height:14px;background:#efede2"></div>
<div style="left:596px;top:197.5px;width:1px;height:14px;background:#efede2"></div>
<div style="left:669px;top:197.5px;width:1px;height:14px;background:#efede2"></div>
<div style="left:745px;top:197.5px;width:1px;height:14px;background:#efede2"></div>
<div style="left:782px;top:197.5px;width:1px;height:14px;background:#efede2"></div>
<div style="left:819px;top:197.5px;width:1px;height:14px;background:#efede2"></div>
<div style="left:856px;top:197.5px;width:1px;height:14px;background:#efede2"></div>
<div style="left:892px;top:197.5px;width:1px;height:14px;background:#efede2"></div>
<div style="left:328px;top:210.5px;width:565px;height:1px;background:#f2f0e6"></div>
<span class="t" style="left:330.50px;top:200.00px;font-size:8.5px;line-height:10px;color:#1a1a1a;transform:scaleX(0.875);transform-origin:0 0;">8</span>
<div style="left:373.5px;top:199.5px;width:10px;height:10px;border-left:1.6px solid #858585;border-top:1.6px solid #858585;box-sizing:border-box;background:#fff"></div>
<span class="t" style="right:480.50px;top:200.00px;font-size:8.5px;line-height:10px;color:#b0b0b0;transform:scaleX(0.875);transform-origin:100% 0;-webkit-text-stroke:0">1</span>
<span class="t" style="right:404.00px;top:200.00px;font-size:8.5px;line-height:10px;color:#1a1a1a;transform:scaleX(0.875);transform-origin:100% 0;">0.000</span>
<span class="t" style="right:367.00px;top:200.00px;font-size:8.5px;line-height:10px;color:#1a1a1a;transform:scaleX(0.875);transform-origin:100% 0;">0.000</span>
<div style="left:628.5px;top:199.5px;width:10px;height:10px;border-left:1.6px solid #858585;border-top:1.6px solid #858585;box-sizing:border-box;background:#fff"></div>
<span class="t" style="right:128.00px;top:200.00px;font-size:8.5px;line-height:10px;color:#1a1a1a;transform:scaleX(0.875);transform-origin:100% 0;">0.000</span>
<span class="t" style="right:91.00px;top:200.00px;font-size:8.5px;line-height:10px;color:#1a1a1a;transform:scaleX(0.875);transform-origin:100% 0;">0.000</span>
<span class="t" style="right:54.00px;top:200.00px;font-size:8.5px;line-height:10px;color:#1a1a1a;transform:scaleX(0.875);transform-origin:100% 0;">0.000</span>
<span class="t" style="right:18.00px;top:200.00px;font-size:8.5px;line-height:10px;color:#1a1a1a;transform:scaleX(0.875);transform-origin:100% 0;">0.000</span>
<div style="left:302px;top:211.5px;width:26px;height:14px;background:#ebe8d8"></div>
<div style="left:302px;top:224.5px;width:26px;height:1px;background:#c6c2ac"></div>
<div style="left:327px;top:211.5px;width:1px;height:14px;background:#bcb8a4"></div>
<div style="left:328px;top:211.5px;width:565px;height:14px;background:#ffffff"></div>
<div style="left:364px;top:211.5px;width:1px;height:14px;background:#efede2"></div>
<div style="left:391px;top:211.5px;width:1px;height:14px;background:#efede2"></div>
<div style="left:430px;top:211.5px;width:1px;height:14px;background:#efede2"></div>
<div style="left:466px;top:211.5px;width:1px;height:14px;background:#efede2"></div>
<div style="left:506px;top:211.5px;width:1px;height:14px;background:#efede2"></div>
<div style="left:543px;top:211.5px;width:1px;height:14px;background:#efede2"></div>
<div style="left:596px;top:211.5px;width:1px;height:14px;background:#efede2"></div>
<div style="left:669px;top:211.5px;width:1px;height:14px;background:#efede2"></div>
<div style="left:745px;top:211.5px;width:1px;height:14px;background:#efede2"></div>
<div style="left:782px;top:211.5px;width:1px;height:14px;background:#efede2"></div>
<div style="left:819px;top:211.5px;width:1px;height:14px;background:#efede2"></div>
<div style="left:856px;top:211.5px;width:1px;height:14px;background:#efede2"></div>
<div style="left:892px;top:211.5px;width:1px;height:14px;background:#efede2"></div>
<div style="left:328px;top:224.5px;width:565px;height:1px;background:#f2f0e6"></div>
<span class="t" style="left:330.50px;top:214.00px;font-size:8.5px;line-height:10px;color:#1a1a1a;transform:scaleX(0.875);transform-origin:0 0;">9</span>
<div style="left:373.5px;top:213.5px;width:10px;height:10px;border-left:1.6px solid #858585;border-top:1.6px solid #858585;box-sizing:border-box;background:#fff"></div>
<span class="t" style="right:480.50px;top:214.00px;font-size:8.5px;line-height:10px;color:#b0b0b0;transform:scaleX(0.875);transform-origin:100% 0;-webkit-text-stroke:0">1</span>
<span class="t" style="right:404.00px;top:214.00px;font-size:8.5px;line-height:10px;color:#1a1a1a;transform:scaleX(0.875);transform-origin:100% 0;">0.000</span>
<span class="t" style="right:367.00px;top:214.00px;font-size:8.5px;line-height:10px;color:#1a1a1a;transform:scaleX(0.875);transform-origin:100% 0;">0.000</span>
<div style="left:628.5px;top:213.5px;width:10px;height:10px;border-left:1.6px solid #858585;border-top:1.6px solid #858585;box-sizing:border-box;background:#fff"></div>
<span class="t" style="right:128.00px;top:214.00px;font-size:8.5px;line-height:10px;color:#1a1a1a;transform:scaleX(0.875);transform-origin:100% 0;">0.000</span>
<span class="t" style="right:91.00px;top:214.00px;font-size:8.5px;line-height:10px;color:#1a1a1a;transform:scaleX(0.875);transform-origin:100% 0;">0.000</span>
<span class="t" style="right:54.00px;top:214.00px;font-size:8.5px;line-height:10px;color:#1a1a1a;transform:scaleX(0.875);transform-origin:100% 0;">0.000</span>
<span class="t" style="right:18.00px;top:214.00px;font-size:8.5px;line-height:10px;color:#1a1a1a;transform:scaleX(0.875);transform-origin:100% 0;">0.000</span>
<div style="left:302px;top:225.5px;width:26px;height:14px;background:#ebe8d8"></div>
<div style="left:302px;top:238.5px;width:26px;height:1px;background:#c6c2ac"></div>
<div style="left:327px;top:225.5px;width:1px;height:14px;background:#bcb8a4"></div>
<div style="left:328px;top:225.5px;width:565px;height:14px;background:#f6f4e2"></div>
<div style="left:364px;top:225.5px;width:1px;height:14px;background:#efede2"></div>
<div style="left:391px;top:225.5px;width:1px;height:14px;background:#efede2"></div>
<div style="left:430px;top:225.5px;width:1px;height:14px;background:#efede2"></div>
<div style="left:466px;top:225.5px;width:1px;height:14px;background:#efede2"></div>
<div style="left:506px;top:225.5px;width:1px;height:14px;background:#efede2"></div>
<div style="left:543px;top:225.5px;width:1px;height:14px;background:#efede2"></div>
<div style="left:596px;top:225.5px;width:1px;height:14px;background:#efede2"></div>
<div style="left:669px;top:225.5px;width:1px;height:14px;background:#efede2"></div>
<div style="left:745px;top:225.5px;width:1px;height:14px;background:#efede2"></div>
<div style="left:782px;top:225.5px;width:1px;height:14px;background:#efede2"></div>
<div style="left:819px;top:225.5px;width:1px;height:14px;background:#efede2"></div>
<div style="left:856px;top:225.5px;width:1px;height:14px;background:#efede2"></div>
<div style="left:892px;top:225.5px;width:1px;height:14px;background:#efede2"></div>
<div style="left:328px;top:238.5px;width:565px;height:1px;background:#f2f0e6"></div>
<span class="t" style="left:330.50px;top:228.00px;font-size:8.5px;line-height:10px;color:#1a1a1a;transform:scaleX(0.875);transform-origin:0 0;">10</span>
<div style="left:373.5px;top:227.5px;width:10px;height:10px;border-left:1.6px solid #858585;border-top:1.6px solid #858585;box-sizing:border-box;background:#fff"></div>
<span class="t" style="right:480.50px;top:228.00px;font-size:8.5px;line-height:10px;color:#b0b0b0;transform:scaleX(0.875);transform-origin:100% 0;-webkit-text-stroke:0">1</span>
<span class="t" style="right:404.00px;top:228.00px;font-size:8.5px;line-height:10px;color:#1a1a1a;transform:scaleX(0.875);transform-origin:100% 0;">0.000</span>
<span class="t" style="right:367.00px;top:228.00px;font-size:8.5px;line-height:10px;color:#1a1a1a;transform:scaleX(0.875);transform-origin:100% 0;">0.000</span>
<div style="left:628.5px;top:227.5px;width:10px;height:10px;border-left:1.6px solid #858585;border-top:1.6px solid #858585;box-sizing:border-box;background:#fff"></div>
<span class="t" style="right:128.00px;top:228.00px;font-size:8.5px;line-height:10px;color:#1a1a1a;transform:scaleX(0.875);transform-origin:100% 0;">0.000</span>
<span class="t" style="right:91.00px;top:228.00px;font-size:8.5px;line-height:10px;color:#1a1a1a;transform:scaleX(0.875);transform-origin:100% 0;">0.000</span>
<span class="t" style="right:54.00px;top:228.00px;font-size:8.5px;line-height:10px;color:#1a1a1a;transform:scaleX(0.875);transform-origin:100% 0;">0.000</span>
<span class="t" style="right:18.00px;top:228.00px;font-size:8.5px;line-height:10px;color:#1a1a1a;transform:scaleX(0.875);transform-origin:100% 0;">0.000</span>
<div style="left:302px;top:239.5px;width:26px;height:14px;background:#ebe8d8"></div>
<div style="left:302px;top:252.5px;width:26px;height:1px;background:#c6c2ac"></div>
<div style="left:327px;top:239.5px;width:1px;height:14px;background:#bcb8a4"></div>
<div style="left:328px;top:239.5px;width:565px;height:14px;background:#ffffff"></div>
<div style="left:364px;top:239.5px;width:1px;height:14px;background:#efede2"></div>
<div style="left:391px;top:239.5px;width:1px;height:14px;background:#efede2"></div>
<div style="left:430px;top:239.5px;width:1px;height:14px;background:#efede2"></div>
<div style="left:466px;top:239.5px;width:1px;height:14px;background:#efede2"></div>
<div style="left:506px;top:239.5px;width:1px;height:14px;background:#efede2"></div>
<div style="left:543px;top:239.5px;width:1px;height:14px;background:#efede2"></div>
<div style="left:596px;top:239.5px;width:1px;height:14px;background:#efede2"></div>
<div style="left:669px;top:239.5px;width:1px;height:14px;background:#efede2"></div>
<div style="left:745px;top:239.5px;width:1px;height:14px;background:#efede2"></div>
<div style="left:782px;top:239.5px;width:1px;height:14px;background:#efede2"></div>
<div style="left:819px;top:239.5px;width:1px;height:14px;background:#efede2"></div>
<div style="left:856px;top:239.5px;width:1px;height:14px;background:#efede2"></div>
<div style="left:892px;top:239.5px;width:1px;height:14px;background:#efede2"></div>
<div style="left:328px;top:252.5px;width:565px;height:1px;background:#f2f0e6"></div>
<span class="t" style="left:330.50px;top:242.00px;font-size:8.5px;line-height:10px;color:#1a1a1a;transform:scaleX(0.875);transform-origin:0 0;">11</span>
<div style="left:373.5px;top:241.5px;width:10px;height:10px;border-left:1.6px solid #858585;border-top:1.6px solid #858585;box-sizing:border-box;background:#fff"></div>
<span class="t" style="right:480.50px;top:242.00px;font-size:8.5px;line-height:10px;color:#b0b0b0;transform:scaleX(0.875);transform-origin:100% 0;-webkit-text-stroke:0">1</span>
<span class="t" style="right:404.00px;top:242.00px;font-size:8.5px;line-height:10px;color:#1a1a1a;transform:scaleX(0.875);transform-origin:100% 0;">0.000</span>
<span class="t" style="right:367.00px;top:242.00px;font-size:8.5px;line-height:10px;color:#1a1a1a;transform:scaleX(0.875);transform-origin:100% 0;">0.000</span>
<div style="left:628.5px;top:241.5px;width:10px;height:10px;border-left:1.6px solid #858585;border-top:1.6px solid #858585;box-sizing:border-box;background:#fff"></div>
<span class="t" style="right:128.00px;top:242.00px;font-size:8.5px;line-height:10px;color:#1a1a1a;transform:scaleX(0.875);transform-origin:100% 0;">0.000</span>
<span class="t" style="right:91.00px;top:242.00px;font-size:8.5px;line-height:10px;color:#1a1a1a;transform:scaleX(0.875);transform-origin:100% 0;">0.000</span>
<span class="t" style="right:54.00px;top:242.00px;font-size:8.5px;line-height:10px;color:#1a1a1a;transform:scaleX(0.875);transform-origin:100% 0;">0.000</span>
<span class="t" style="right:18.00px;top:242.00px;font-size:8.5px;line-height:10px;color:#1a1a1a;transform:scaleX(0.875);transform-origin:100% 0;">0.000</span>
<div style="left:302px;top:253.5px;width:26px;height:14px;background:#ebe8d8"></div>
<div style="left:302px;top:266.5px;width:26px;height:1px;background:#c6c2ac"></div>
<div style="left:327px;top:253.5px;width:1px;height:14px;background:#bcb8a4"></div>
<div style="left:328px;top:253.5px;width:565px;height:14px;background:#f6f4e2"></div>
<div style="left:364px;top:253.5px;width:1px;height:14px;background:#efede2"></div>
<div style="left:391px;top:253.5px;width:1px;height:14px;background:#efede2"></div>
<div style="left:430px;top:253.5px;width:1px;height:14px;background:#efede2"></div>
<div style="left:466px;top:253.5px;width:1px;height:14px;background:#efede2"></div>
<div style="left:506px;top:253.5px;width:1px;height:14px;background:#efede2"></div>
<div style="left:543px;top:253.5px;width:1px;height:14px;background:#efede2"></div>
<div style="left:596px;top:253.5px;width:1px;height:14px;background:#efede2"></div>
<div style="left:669px;top:253.5px;width:1px;height:14px;background:#efede2"></div>
<div style="left:745px;top:253.5px;width:1px;height:14px;background:#efede2"></div>
<div style="left:782px;top:253.5px;width:1px;height:14px;background:#efede2"></div>
<div style="left:819px;top:253.5px;width:1px;height:14px;background:#efede2"></div>
<div style="left:856px;top:253.5px;width:1px;height:14px;background:#efede2"></div>
<div style="left:892px;top:253.5px;width:1px;height:14px;background:#efede2"></div>
<div style="left:328px;top:266.5px;width:565px;height:1px;background:#f2f0e6"></div>
<span class="t" style="left:330.50px;top:256.00px;font-size:8.5px;line-height:10px;color:#1a1a1a;transform:scaleX(0.875);transform-origin:0 0;">12</span>
<div style="left:373.5px;top:255.5px;width:10px;height:10px;border-left:1.6px solid #858585;border-top:1.6px solid #858585;box-sizing:border-box;background:#fff"></div>
<span class="t" style="right:480.50px;top:256.00px;font-size:8.5px;line-height:10px;color:#b0b0b0;transform:scaleX(0.875);transform-origin:100% 0;-webkit-text-stroke:0">1</span>
<span class="t" style="right:404.00px;top:256.00px;font-size:8.5px;line-height:10px;color:#1a1a1a;transform:scaleX(0.875);transform-origin:100% 0;">0.000</span>
<span class="t" style="right:367.00px;top:256.00px;font-size:8.5px;line-height:10px;color:#1a1a1a;transform:scaleX(0.875);transform-origin:100% 0;">0.000</span>
<div style="left:628.5px;top:255.5px;width:10px;height:10px;border-left:1.6px solid #858585;border-top:1.6px solid #858585;box-sizing:border-box;background:#fff"></div>
<span class="t" style="right:128.00px;top:256.00px;font-size:8.5px;line-height:10px;color:#1a1a1a;transform:scaleX(0.875);transform-origin:100% 0;">0.000</span>
<span class="t" style="right:91.00px;top:256.00px;font-size:8.5px;line-height:10px;color:#1a1a1a;transform:scaleX(0.875);transform-origin:100% 0;">0.000</span>
<span class="t" style="right:54.00px;top:256.00px;font-size:8.5px;line-height:10px;color:#1a1a1a;transform:scaleX(0.875);transform-origin:100% 0;">0.000</span>
<span class="t" style="right:18.00px;top:256.00px;font-size:8.5px;line-height:10px;color:#1a1a1a;transform:scaleX(0.875);transform-origin:100% 0;">0.000</span>
<div style="left:302px;top:267.5px;width:26px;height:14px;background:#ebe8d8"></div>
<div style="left:302px;top:280.5px;width:26px;height:1px;background:#c6c2ac"></div>
<div style="left:327px;top:267.5px;width:1px;height:14px;background:#bcb8a4"></div>
<div style="left:328px;top:267.5px;width:565px;height:14px;background:#ffffff"></div>
<div style="left:364px;top:267.5px;width:1px;height:14px;background:#efede2"></div>
<div style="left:391px;top:267.5px;width:1px;height:14px;background:#efede2"></div>
<div style="left:430px;top:267.5px;width:1px;height:14px;background:#efede2"></div>
<div style="left:466px;top:267.5px;width:1px;height:14px;background:#efede2"></div>
<div style="left:506px;top:267.5px;width:1px;height:14px;background:#efede2"></div>
<div style="left:543px;top:267.5px;width:1px;height:14px;background:#efede2"></div>
<div style="left:596px;top:267.5px;width:1px;height:14px;background:#efede2"></div>
<div style="left:669px;top:267.5px;width:1px;height:14px;background:#efede2"></div>
<div style="left:745px;top:267.5px;width:1px;height:14px;background:#efede2"></div>
<div style="left:782px;top:267.5px;width:1px;height:14px;background:#efede2"></div>
<div style="left:819px;top:267.5px;width:1px;height:14px;background:#efede2"></div>
<div style="left:856px;top:267.5px;width:1px;height:14px;background:#efede2"></div>
<div style="left:892px;top:267.5px;width:1px;height:14px;background:#efede2"></div>
<div style="left:328px;top:280.5px;width:565px;height:1px;background:#f2f0e6"></div>
<span class="t" style="left:330.50px;top:270.00px;font-size:8.5px;line-height:10px;color:#1a1a1a;transform:scaleX(0.875);transform-origin:0 0;">13</span>
<div style="left:373.5px;top:269.5px;width:10px;height:10px;border-left:1.6px solid #858585;border-top:1.6px solid #858585;box-sizing:border-box;background:#fff"></div>
<span class="t" style="right:480.50px;top:270.00px;font-size:8.5px;line-height:10px;color:#b0b0b0;transform:scaleX(0.875);transform-origin:100% 0;-webkit-text-stroke:0">1</span>
<span class="t" style="right:404.00px;top:270.00px;font-size:8.5px;line-height:10px;color:#1a1a1a;transform:scaleX(0.875);transform-origin:100% 0;">0.000</span>
<span class="t" style="right:367.00px;top:270.00px;font-size:8.5px;line-height:10px;color:#1a1a1a;transform:scaleX(0.875);transform-origin:100% 0;">0.000</span>
<div style="left:628.5px;top:269.5px;width:10px;height:10px;border-left:1.6px solid #858585;border-top:1.6px solid #858585;box-sizing:border-box;background:#fff"></div>
<span class="t" style="right:128.00px;top:270.00px;font-size:8.5px;line-height:10px;color:#1a1a1a;transform:scaleX(0.875);transform-origin:100% 0;">0.000</span>
<span class="t" style="right:91.00px;top:270.00px;font-size:8.5px;line-height:10px;color:#1a1a1a;transform:scaleX(0.875);transform-origin:100% 0;">0.000</span>
<span class="t" style="right:54.00px;top:270.00px;font-size:8.5px;line-height:10px;color:#1a1a1a;transform:scaleX(0.875);transform-origin:100% 0;">0.000</span>
<span class="t" style="right:18.00px;top:270.00px;font-size:8.5px;line-height:10px;color:#1a1a1a;transform:scaleX(0.875);transform-origin:100% 0;">0.000</span>
<div style="left:302px;top:281.5px;width:26px;height:14px;background:#ebe8d8"></div>
<div style="left:302px;top:294.5px;width:26px;height:1px;background:#c6c2ac"></div>
<div style="left:327px;top:281.5px;width:1px;height:14px;background:#bcb8a4"></div>
<div style="left:328px;top:281.5px;width:565px;height:14px;background:#f6f4e2"></div>
<div style="left:364px;top:281.5px;width:1px;height:14px;background:#efede2"></div>
<div style="left:391px;top:281.5px;width:1px;height:14px;background:#efede2"></div>
<div style="left:430px;top:281.5px;width:1px;height:14px;background:#efede2"></div>
<div style="left:466px;top:281.5px;width:1px;height:14px;background:#efede2"></div>
<div style="left:506px;top:281.5px;width:1px;height:14px;background:#efede2"></div>
<div style="left:543px;top:281.5px;width:1px;height:14px;background:#efede2"></div>
<div style="left:596px;top:281.5px;width:1px;height:14px;background:#efede2"></div>
<div style="left:669px;top:281.5px;width:1px;height:14px;background:#efede2"></div>
<div style="left:745px;top:281.5px;width:1px;height:14px;background:#efede2"></div>
<div style="left:782px;top:281.5px;width:1px;height:14px;background:#efede2"></div>
<div style="left:819px;top:281.5px;width:1px;height:14px;background:#efede2"></div>
<div style="left:856px;top:281.5px;width:1px;height:14px;background:#efede2"></div>
<div style="left:892px;top:281.5px;width:1px;height:14px;background:#efede2"></div>
<div style="left:328px;top:294.5px;width:565px;height:1px;background:#f2f0e6"></div>
<span class="t" style="left:330.50px;top:284.00px;font-size:8.5px;line-height:10px;color:#1a1a1a;transform:scaleX(0.875);transform-origin:0 0;">14</span>
<div style="left:373.5px;top:283.5px;width:10px;height:10px;border-left:1.6px solid #858585;border-top:1.6px solid #858585;box-sizing:border-box;background:#fff"></div>
<span class="t" style="right:480.50px;top:284.00px;font-size:8.5px;line-height:10px;color:#b0b0b0;transform:scaleX(0.875);transform-origin:100% 0;-webkit-text-stroke:0">1</span>
<span class="t" style="right:404.00px;top:284.00px;font-size:8.5px;line-height:10px;color:#1a1a1a;transform:scaleX(0.875);transform-origin:100% 0;">0.000</span>
<span class="t" style="right:367.00px;top:284.00px;font-size:8.5px;line-height:10px;color:#1a1a1a;transform:scaleX(0.875);transform-origin:100% 0;">0.000</span>
<div style="left:628.5px;top:283.5px;width:10px;height:10px;border-left:1.6px solid #858585;border-top:1.6px solid #858585;box-sizing:border-box;background:#fff"></div>
<span class="t" style="right:128.00px;top:284.00px;font-size:8.5px;line-height:10px;color:#1a1a1a;transform:scaleX(0.875);transform-origin:100% 0;">0.000</span>
<span class="t" style="right:91.00px;top:284.00px;font-size:8.5px;line-height:10px;color:#1a1a1a;transform:scaleX(0.875);transform-origin:100% 0;">0.000</span>
<span class="t" style="right:54.00px;top:284.00px;font-size:8.5px;line-height:10px;color:#1a1a1a;transform:scaleX(0.875);transform-origin:100% 0;">0.000</span>
<span class="t" style="right:18.00px;top:284.00px;font-size:8.5px;line-height:10px;color:#1a1a1a;transform:scaleX(0.875);transform-origin:100% 0;">0.000</span>
<div style="left:302px;top:295.5px;width:26px;height:14px;background:#ebe8d8"></div>
<div style="left:302px;top:308.5px;width:26px;height:1px;background:#c6c2ac"></div>
<div style="left:327px;top:295.5px;width:1px;height:14px;background:#bcb8a4"></div>
<div style="left:328px;top:295.5px;width:565px;height:14px;background:#ffffff"></div>
<div style="left:364px;top:295.5px;width:1px;height:14px;background:#efede2"></div>
<div style="left:391px;top:295.5px;width:1px;height:14px;background:#efede2"></div>
<div style="left:430px;top:295.5px;width:1px;height:14px;background:#efede2"></div>
<div style="left:466px;top:295.5px;width:1px;height:14px;background:#efede2"></div>
<div style="left:506px;top:295.5px;width:1px;height:14px;background:#efede2"></div>
<div style="left:543px;top:295.5px;width:1px;height:14px;background:#efede2"></div>
<div style="left:596px;top:295.5px;width:1px;height:14px;background:#efede2"></div>
<div style="left:669px;top:295.5px;width:1px;height:14px;background:#efede2"></div>
<div style="left:745px;top:295.5px;width:1px;height:14px;background:#efede2"></div>
<div style="left:782px;top:295.5px;width:1px;height:14px;background:#efede2"></div>
<div style="left:819px;top:295.5px;width:1px;height:14px;background:#efede2"></div>
<div style="left:856px;top:295.5px;width:1px;height:14px;background:#efede2"></div>
<div style="left:892px;top:295.5px;width:1px;height:14px;background:#efede2"></div>
<div style="left:328px;top:308.5px;width:565px;height:1px;background:#f2f0e6"></div>
<span class="t" style="left:330.50px;top:298.00px;font-size:8.5px;line-height:10px;color:#1a1a1a;transform:scaleX(0.875);transform-origin:0 0;">15</span>
<div style="left:373.5px;top:297.5px;width:10px;height:10px;border-left:1.6px solid #858585;border-top:1.6px solid #858585;box-sizing:border-box;background:#fff"></div>
<span class="t" style="right:480.50px;top:298.00px;font-size:8.5px;line-height:10px;color:#b0b0b0;transform:scaleX(0.875);transform-origin:100% 0;-webkit-text-stroke:0">1</span>
<span class="t" style="right:404.00px;top:298.00px;font-size:8.5px;line-height:10px;color:#1a1a1a;transform:scaleX(0.875);transform-origin:100% 0;">0.000</span>
<span class="t" style="right:367.00px;top:298.00px;font-size:8.5px;line-height:10px;color:#1a1a1a;transform:scaleX(0.875);transform-origin:100% 0;">0.000</span>
<div style="left:628.5px;top:297.5px;width:10px;height:10px;border-left:1.6px solid #858585;border-top:1.6px solid #858585;box-sizing:border-box;background:#fff"></div>
<span class="t" style="right:128.00px;top:298.00px;font-size:8.5px;line-height:10px;color:#1a1a1a;transform:scaleX(0.875);transform-origin:100% 0;">0.000</span>
<span class="t" style="right:91.00px;top:298.00px;font-size:8.5px;line-height:10px;color:#1a1a1a;transform:scaleX(0.875);transform-origin:100% 0;">0.000</span>
<span class="t" style="right:54.00px;top:298.00px;font-size:8.5px;line-height:10px;color:#1a1a1a;transform:scaleX(0.875);transform-origin:100% 0;">0.000</span>
<span class="t" style="right:18.00px;top:298.00px;font-size:8.5px;line-height:10px;color:#1a1a1a;transform:scaleX(0.875);transform-origin:100% 0;">0.000</span>
<div style="left:302px;top:309.5px;width:26px;height:14px;background:#ebe8d8"></div>
<div style="left:302px;top:322.5px;width:26px;height:1px;background:#c6c2ac"></div>
<div style="left:327px;top:309.5px;width:1px;height:14px;background:#bcb8a4"></div>
<div style="left:328px;top:309.5px;width:565px;height:14px;background:#f6f4e2"></div>
<div style="left:364px;top:309.5px;width:1px;height:14px;background:#efede2"></div>
<div style="left:391px;top:309.5px;width:1px;height:14px;background:#efede2"></div>
<div style="left:430px;top:309.5px;width:1px;height:14px;background:#efede2"></div>
<div style="left:466px;top:309.5px;width:1px;height:14px;background:#efede2"></div>
<div style="left:506px;top:309.5px;width:1px;height:14px;background:#efede2"></div>
<div style="left:543px;top:309.5px;width:1px;height:14px;background:#efede2"></div>
<div style="left:596px;top:309.5px;width:1px;height:14px;background:#efede2"></div>
<div style="left:669px;top:309.5px;width:1px;height:14px;background:#efede2"></div>
<div style="left:745px;top:309.5px;width:1px;height:14px;background:#efede2"></div>
<div style="left:782px;top:309.5px;width:1px;height:14px;background:#efede2"></div>
<div style="left:819px;top:309.5px;width:1px;height:14px;background:#efede2"></div>
<div style="left:856px;top:309.5px;width:1px;height:14px;background:#efede2"></div>
<div style="left:892px;top:309.5px;width:1px;height:14px;background:#efede2"></div>
<div style="left:328px;top:322.5px;width:565px;height:1px;background:#f2f0e6"></div>
<span class="t" style="left:330.50px;top:312.00px;font-size:8.5px;line-height:10px;color:#1a1a1a;transform:scaleX(0.875);transform-origin:0 0;">16</span>
<div style="left:373.5px;top:311.5px;width:10px;height:10px;border-left:1.6px solid #858585;border-top:1.6px solid #858585;box-sizing:border-box;background:#fff"></div>
<span class="t" style="right:480.50px;top:312.00px;font-size:8.5px;line-height:10px;color:#b0b0b0;transform:scaleX(0.875);transform-origin:100% 0;-webkit-text-stroke:0">1</span>
<span class="t" style="right:404.00px;top:312.00px;font-size:8.5px;line-height:10px;color:#1a1a1a;transform:scaleX(0.875);transform-origin:100% 0;">0.000</span>
<span class="t" style="right:367.00px;top:312.00px;font-size:8.5px;line-height:10px;color:#1a1a1a;transform:scaleX(0.875);transform-origin:100% 0;">0.000</span>
<div style="left:628.5px;top:311.5px;width:10px;height:10px;border-left:1.6px solid #858585;border-top:1.6px solid #858585;box-sizing:border-box;background:#fff"></div>
<span class="t" style="right:128.00px;top:312.00px;font-size:8.5px;line-height:10px;color:#1a1a1a;transform:scaleX(0.875);transform-origin:100% 0;">0.000</span>
<span class="t" style="right:91.00px;top:312.00px;font-size:8.5px;line-height:10px;color:#1a1a1a;transform:scaleX(0.875);transform-origin:100% 0;">0.000</span>
<span class="t" style="right:54.00px;top:312.00px;font-size:8.5px;line-height:10px;color:#1a1a1a;transform:scaleX(0.875);transform-origin:100% 0;">0.000</span>
<span class="t" style="right:18.00px;top:312.00px;font-size:8.5px;line-height:10px;color:#1a1a1a;transform:scaleX(0.875);transform-origin:100% 0;">0.000</span>
<div style="left:302px;top:323.5px;width:26px;height:14px;background:#ebe8d8"></div>
<div style="left:302px;top:336.5px;width:26px;height:1px;background:#c6c2ac"></div>
<div style="left:327px;top:323.5px;width:1px;height:14px;background:#bcb8a4"></div>
<div style="left:328px;top:323.5px;width:565px;height:14px;background:#ffffff"></div>
<div style="left:364px;top:323.5px;width:1px;height:14px;background:#efede2"></div>
<div style="left:391px;top:323.5px;width:1px;height:14px;background:#efede2"></div>
<div style="left:430px;top:323.5px;width:1px;height:14px;background:#efede2"></div>
<div style="left:466px;top:323.5px;width:1px;height:14px;background:#efede2"></div>
<div style="left:506px;top:323.5px;width:1px;height:14px;background:#efede2"></div>
<div style="left:543px;top:323.5px;width:1px;height:14px;background:#efede2"></div>
<div style="left:596px;top:323.5px;width:1px;height:14px;background:#efede2"></div>
<div style="left:669px;top:323.5px;width:1px;height:14px;background:#efede2"></div>
<div style="left:745px;top:323.5px;width:1px;height:14px;background:#efede2"></div>
<div style="left:782px;top:323.5px;width:1px;height:14px;background:#efede2"></div>
<div style="left:819px;top:323.5px;width:1px;height:14px;background:#efede2"></div>
<div style="left:856px;top:323.5px;width:1px;height:14px;background:#efede2"></div>
<div style="left:892px;top:323.5px;width:1px;height:14px;background:#efede2"></div>
<div style="left:328px;top:336.5px;width:565px;height:1px;background:#f2f0e6"></div>
<span class="t" style="left:330.50px;top:326.00px;font-size:8.5px;line-height:10px;color:#1a1a1a;transform:scaleX(0.875);transform-origin:0 0;">17</span>
<div style="left:373.5px;top:325.5px;width:10px;height:10px;border-left:1.6px solid #858585;border-top:1.6px solid #858585;box-sizing:border-box;background:#fff"></div>
<span class="t" style="right:480.50px;top:326.00px;font-size:8.5px;line-height:10px;color:#b0b0b0;transform:scaleX(0.875);transform-origin:100% 0;-webkit-text-stroke:0">1</span>
<span class="t" style="right:404.00px;top:326.00px;font-size:8.5px;line-height:10px;color:#1a1a1a;transform:scaleX(0.875);transform-origin:100% 0;">0.000</span>
<span class="t" style="right:367.00px;top:326.00px;font-size:8.5px;line-height:10px;color:#1a1a1a;transform:scaleX(0.875);transform-origin:100% 0;">0.000</span>
<div style="left:628.5px;top:325.5px;width:10px;height:10px;border-left:1.6px solid #858585;border-top:1.6px solid #858585;box-sizing:border-box;background:#fff"></div>
<span class="t" style="right:128.00px;top:326.00px;font-size:8.5px;line-height:10px;color:#1a1a1a;transform:scaleX(0.875);transform-origin:100% 0;">0.000</span>
<span class="t" style="right:91.00px;top:326.00px;font-size:8.5px;line-height:10px;color:#1a1a1a;transform:scaleX(0.875);transform-origin:100% 0;">0.000</span>
<span class="t" style="right:54.00px;top:326.00px;font-size:8.5px;line-height:10px;color:#1a1a1a;transform:scaleX(0.875);transform-origin:100% 0;">0.000</span>
<span class="t" style="right:18.00px;top:326.00px;font-size:8.5px;line-height:10px;color:#1a1a1a;transform:scaleX(0.875);transform-origin:100% 0;">0.000</span>
<div style="left:302px;top:337.5px;width:26px;height:10.5px;background:#ebe8d8"></div>
<div style="left:327px;top:337.5px;width:1px;height:10.5px;background:#bcb8a4"></div>
<div style="left:328px;top:337.5px;width:565px;height:10.5px;background:#f6f4e2"></div>
<div style="left:364px;top:337.5px;width:1px;height:10.5px;background:#efede2"></div>
<div style="left:391px;top:337.5px;width:1px;height:10.5px;background:#efede2"></div>
<div style="left:430px;top:337.5px;width:1px;height:10.5px;background:#efede2"></div>
<div style="left:466px;top:337.5px;width:1px;height:10.5px;background:#efede2"></div>
<div style="left:506px;top:337.5px;width:1px;height:10.5px;background:#efede2"></div>
<div style="left:543px;top:337.5px;width:1px;height:10.5px;background:#efede2"></div>
<div style="left:596px;top:337.5px;width:1px;height:10.5px;background:#efede2"></div>
<div style="left:669px;top:337.5px;width:1px;height:10.5px;background:#efede2"></div>
<div style="left:745px;top:337.5px;width:1px;height:10.5px;background:#efede2"></div>
<div style="left:782px;top:337.5px;width:1px;height:10.5px;background:#efede2"></div>
<div style="left:819px;top:337.5px;width:1px;height:10.5px;background:#efede2"></div>
<div style="left:856px;top:337.5px;width:1px;height:10.5px;background:#efede2"></div>
<div style="left:892px;top:337.5px;width:1px;height:10.5px;background:#efede2"></div>
<span class="t" style="left:330.50px;top:340.00px;font-size:8.5px;line-height:10px;color:#1a1a1a;transform:scaleX(0.875);transform-origin:0 0;">18</span>
<div style="left:373.5px;top:339.5px;width:10px;height:10px;border-left:1.6px solid #858585;border-top:1.6px solid #858585;box-sizing:border-box;background:#fff"></div>
<span class="t" style="right:480.50px;top:340.00px;font-size:8.5px;line-height:10px;color:#b0b0b0;transform:scaleX(0.875);transform-origin:100% 0;-webkit-text-stroke:0">1</span>
<span class="t" style="right:404.00px;top:340.00px;font-size:8.5px;line-height:10px;color:#1a1a1a;transform:scaleX(0.875);transform-origin:100% 0;">0.000</span>
<span class="t" style="right:367.00px;top:340.00px;font-size:8.5px;line-height:10px;color:#1a1a1a;transform:scaleX(0.875);transform-origin:100% 0;">0.000</span>
<div style="left:628.5px;top:339.5px;width:10px;height:10px;border-left:1.6px solid #858585;border-top:1.6px solid #858585;box-sizing:border-box;background:#fff"></div>
<span class="t" style="right:128.00px;top:340.00px;font-size:8.5px;line-height:10px;color:#1a1a1a;transform:scaleX(0.875);transform-origin:100% 0;">0.000</span>
<span class="t" style="right:91.00px;top:340.00px;font-size:8.5px;line-height:10px;color:#1a1a1a;transform:scaleX(0.875);transform-origin:100% 0;">0.000</span>
<span class="t" style="right:54.00px;top:340.00px;font-size:8.5px;line-height:10px;color:#1a1a1a;transform:scaleX(0.875);transform-origin:100% 0;">0.000</span>
<span class="t" style="right:18.00px;top:340.00px;font-size:8.5px;line-height:10px;color:#1a1a1a;transform:scaleX(0.875);transform-origin:100% 0;">0.000</span>
<div style="left:893px;top:84px;width:13.700000000000045px;height:264px;background:#818181"></div>
<div style="left:0px;top:458px;width:907px;height:2px;background:#141008"></div>
<div style="left:0px;top:459px;width:2px;height:371px;background:#606062"></div>
<div style="left:2px;top:460px;width:905px;height:18px;background:linear-gradient(#fdd88c,#fcc878 30%,#fbb862 60%,#fbaa4e)"></div>
<div style="left:3px;top:463.5px;width:1px;height:1px;background:#6a5030"></div>
<div style="left:3px;top:466.0px;width:1px;height:1px;background:#6a5030"></div>
<div style="left:3px;top:468.5px;width:1px;height:1px;background:#6a5030"></div>
<div style="left:3px;top:471.0px;width:1px;height:1px;background:#6a5030"></div>
<div style="left:3px;top:473.5px;width:1px;height:1px;background:#6a5030"></div>
<span class="t" style="left:8.30px;top:464.00px;font-size:8.5px;line-height:10px;color:#1e1200;transform:scaleX(0.88);transform-origin:0 0;-webkit-text-stroke:0.22px #1e1200">Object Properties</span>
<div style="left:2px;top:478px;width:905px;height:1px;background:#4a3a22"></div>
<div style="left:2px;top:479px;width:905px;height:334px;background:#9dbdf2"></div>
<div style="left:2px;top:485px;width:283px;height:320px;background:#fff"></div>
<div style="left:2px;top:484px;width:283px;height:1px;background:#86a4d6"></div>
<div style="left:8.3px;top:488.6px;width:5px;height:5px;border:1px solid #b0b0b4;border-radius:1px;background:linear-gradient(#fcfcfc,#d4d4d8)"><div style="left:1px;top:2px;width:3px;height:1px;background:#3c3c48"></div></div>
<div style="left:18.7px;top:486.3px;width:12px;height:11px"><svg width="12" height="11" viewBox="0 0 12 11"><circle cx="3.9" cy="1.9" r="1.8" fill="#1a1a1a"/><circle cx="8.1" cy="1.9" r="1.8" fill="#1a1a1a"/><circle cx="3.9" cy="1.6" r="0.6" fill="#999"/><circle cx="8.1" cy="1.6" r="0.6" fill="#999"/><rect x="0.75" y="3.75" width="10.5" height="6.6" rx="0.6" fill="#9a9a9a" stroke="#141414" stroke-width="1.4"/><path d="M2 5.6 H10 M2 8 H10" stroke="#d8d8d8" stroke-width="0.9"/></svg></div>
<span class="t" style="left:33.00px;top:487.00px;font-size:8.5px;line-height:10px;color:#1c1c1c;transform:scaleX(0.885);transform-origin:0 0;">SetupDoku_ini_Demo JTF</span>
<div style="left:22.2px;top:501.52000000000004px;width:5px;height:5px;border:1px solid #b0b0b4;border-radius:1px;background:linear-gradient(#fcfcfc,#d4d4d8)"><div style="left:1px;top:2px;width:3px;height:1px;background:#3c3c48"></div></div>
<div style="left:33.2px;top:499.02000000000004px;width:11px;height:11px"><svg width="11" height="11" viewBox="0 0 11 11"><rect x="4.6" y="0.6" width="3.8" height="3.2" fill="#fff" stroke="#151515" stroke-width="1.2"/><path d="M6.5 3.5 V5" stroke="#151515" stroke-width="1.2"/><rect x="1.4" y="4.7" width="8.9" height="5.6" rx="1.2" fill="#fff" stroke="#151515" stroke-width="1.4"/><path d="M3.6 10 V7.4 H7.6 V10" fill="none" stroke="#333" stroke-width="0.9"/><path d="M0 8.6 L2.2 7 V10.2Z" fill="#151515"/></svg></div>
<span class="t" style="left:47.50px;top:500.00px;font-size:8.5px;line-height:10px;color:#1c1c1c;transform:scaleX(0.86);transform-origin:0 0;">SX2_Doku</span>
<div style="left:35.5px;top:514.44px;width:5px;height:5px;border:1px solid #b0b0b4;border-radius:1px;background:linear-gradient(#fcfcfc,#d4d4d8)"><div style="left:1px;top:2px;width:3px;height:1px;background:#3c3c48"></div></div>
<div style="left:45.9px;top:514.1400000000001px;width:12px;height:9px"><svg width="12" height="9" viewBox="0 0 12 9"><path d="M0.3 0.3 H9.6 L11 2.5 H0.8Z" fill="#1c1c1c"/><path d="M1.3 2 V8.5 M10.2 2 V8.5" stroke="#151515" stroke-width="1.4"/><path d="M3.8 2.2 V7.5 M7.3 2.2 V7.5" stroke="#2a2a2a" stroke-width="1"/><path d="M1.3 4.3 H10.2" stroke="#151515" stroke-width="1.1"/></svg></div>
<span class="t" style="left:61.30px;top:513.00px;font-size:8.5px;line-height:10px;color:#1c1c1c;transform:scaleX(0.885);transform-origin:0 0;">Location 1 - MTF Table 60 X (System \ Table7)</span>
<div style="left:49px;top:527.36px;width:5px;height:5px;border:1px solid #b0b0b4;border-radius:1px;background:linear-gradient(#fcfcfc,#d4d4d8)"><div style="left:1px;top:2px;width:3px;height:1px;background:#3c3c48"></div></div>
<div style="left:58.9px;top:526.36px;width:13px;height:10px"><svg width="13" height="10" viewBox="0 0 13 10"><path d="M0.5 0.8 H6.5 Q8 0.8 8.8 2" fill="none" stroke="#2a3a88" stroke-width="1.1"/><circle cx="1.8" cy="6" r="1" fill="#151515"/><path d="M2.5 6 H5" stroke="#555" stroke-width="0.8"/><circle cx="8.6" cy="5.8" r="3.3" fill="#eee" stroke="#111" stroke-width="1.4"/><path d="M8.6 3.6 V8 M6.4 5.8 H10.8" stroke="#888" stroke-width="0.6"/></svg></div>
<span class="t" style="left:74.40px;top:526.00px;font-size:8.5px;line-height:10px;color:#1c1c1c;transform:scaleX(0.84);transform-origin:0 0;">11 - JEDEC Tray Stack Feeder</span>
<div style="left:74.4px;top:538.28px;width:10px;height:12px"><svg width="10" height="12" viewBox="0 0 10 12"><rect x="0.6" y="0.6" width="8.8" height="10.6" fill="#f2f2f2" stroke="#4c4c4c" stroke-width="1.2"/><rect x="1.2" y="1.2" width="2" height="9.4" fill="#c8c8c8"/><rect x="3.6" y="2.2" width="4.6" height="2.2" fill="#8a8a98"/><rect x="3.6" y="5" width="4.6" height="2.2" fill="#8a8a98"/><rect x="3.6" y="7.8" width="4.6" height="2.2" fill="#8a8a98"/></svg></div>
<div style="left:87.4px;top:537.28px;width:28px;height:13px;background:#316ac5"></div>
<span class="t" style="left:89.40px;top:539.00px;font-size:8.5px;line-height:10px;color:#fff;transform:scaleX(0.885);transform-origin:0 0;">Carrier</span>
<div style="left:45.9px;top:552.9000000000001px;width:12px;height:9px"><svg width="12" height="9" viewBox="0 0 12 9"><path d="M0.3 0.3 H9.6 L11 2.5 H0.8Z" fill="#1c1c1c"/><path d="M1.3 2 V8.5 M10.2 2 V8.5" stroke="#151515" stroke-width="1.4"/><path d="M3.8 2.2 V7.5 M7.3 2.2 V7.5" stroke="#2a2a2a" stroke-width="1"/><path d="M1.3 4.3 H10.2" stroke="#151515" stroke-width="1.1"/></svg></div>
<span class="t" style="left:61.30px;top:552.00px;font-size:8.5px;line-height:10px;color:#1c1c1c;transform:scaleX(0.885);transform-origin:0 0;">Location 2 - Change Over Table 60 X (System \ Table5)</span>
<div style="left:24.2px;top:497.5px;width:1px;height:4.0px;background:#dcdcdc"></div>
<div style="left:29.2px;top:505px;width:4.0000000000000036px;height:1px;background:#dcdcdc"></div>
<div style="left:38.2px;top:510.5px;width:1px;height:4.0px;background:#dcdcdc"></div>
<div style="left:38.5px;top:521.5px;width:1px;height:36.5px;background:#dcdcdc"></div>
<div style="left:42.5px;top:518px;width:3.3999999999999986px;height:1px;background:#dcdcdc"></div>
<div style="left:38.5px;top:558px;width:7.399999999999999px;height:1px;background:#dcdcdc"></div>
<div style="left:51.4px;top:522.5px;width:1px;height:5.0px;background:#dcdcdc"></div>
<div style="left:56px;top:531px;width:2.8999999999999986px;height:1px;background:#dcdcdc"></div>
<div style="left:65.9px;top:535.5px;width:1px;height:9.5px;background:#dcdcdc"></div>
<div style="left:65.9px;top:545px;width:8.5px;height:1px;background:#dcdcdc"></div>
<div style="left:289px;top:484px;width:36px;height:17px;background:linear-gradient(#fff,#fcfbf7);border-top:1px solid #eaa84e;box-sizing:border-box"></div>
<span class="t" style="left:293.50px;top:487.00px;font-size:8.5px;line-height:10px;color:#1a1a1a;transform:scaleX(0.83);transform-origin:0 0;">Feeders</span>
<div style="left:325px;top:486px;width:63px;height:15px;background:linear-gradient(#fbfaf4,#ece9dc);border:1px solid #a0aac0;border-bottom:none;box-sizing:border-box"></div>
<span class="t" style="left:329.50px;top:488.00px;font-size:8.5px;line-height:10px;color:#1a1a1a;transform:scaleX(0.87);transform-origin:0 0;">Table Properties</span>
<div style="left:388px;top:499.5px;width:519px;height:1.5px;background:#8ea6cc"></div>
<div style="left:289px;top:501px;width:618px;height:3px;background:#fdfdfb"></div>
<div style="left:289px;top:501px;width:4.5px;height:303px;background:#fdfdfb"></div>
<div style="left:289px;top:801px;width:618px;height:3.5px;background:#f6f4ee"></div>
<div style="left:294.6px;top:507.8px;width:51.3px;height:17px;background:linear-gradient(#e2ecfc,#c2d6f6 60%,#aac6f2);border-right:1px solid #6f8fcf;border-bottom:1px solid #8aa8dc;border-top-left-radius:2px;box-sizing:border-box"></div>
<div style="left:299.1px;top:512.6px;width:9px;height:9px"><svg width="9" height="9" viewBox="0 0 9 9"><path d="M1.2 3.5 V7.8 H7.8 V1.2 H3.5" fill="none" stroke="#1c2a48" stroke-width="1.5" stroke-linejoin="round"/><path d="M0.5 0.5 H3.2 V3.2 H0.5Z" fill="#a8b4a0"/></svg></div>
<div style="left:316.1px;top:512.3px;width:9px;height:9px"><svg width="9" height="9" viewBox="0 0 9 9"><path d="M1 1 L8 8 M8 1 L1 8" stroke="#5a5a60" stroke-width="1.3"/><circle cx="4.5" cy="4.5" r="0.8" fill="#3a1808"/></svg></div>
<div style="left:329.8px;top:510.0px;width:12px;height:12px"><svg width="12" height="12" viewBox="0 0 12 12"><path d="M6.5 0 V2.2 M6.5 10.3 V12 M0.5 6.5 H2.5 M10.5 6.5 H12.5 M2 2 L3.6 3.6 M9.4 9.4 L11 11 M11 2 L9.4 3.6 M3.6 9.4 L2 11" stroke="#15151f" stroke-width="1"/><circle cx="6.5" cy="6.5" r="3.6" fill="#fff" stroke="#111" stroke-width="0.6"/><path d="M6.5 2.9 A3.6 3.6 0 0 1 6.5 10.1Z" fill="#111"/></svg></div>
<div style="left:294px;top:525.5px;width:613px;height:2.5px;background:#f2f6fc"></div>
<div style="left:297.5px;top:528.5px;width:609.5px;height:15.3px;background:#0553e6"></div>
<div style="left:297.5px;top:528.5px;width:609.5px;height:1px;background:#2a4a9a"></div>
<div style="left:297.5px;top:542.8px;width:609.5px;height:1px;background:#0a3cb0"></div>
<span class="t" style="left:301.50px;top:532.00px;font-size:8.5px;line-height:10px;color:#fff;transform:scaleX(0.9);transform-origin:0 0;font-weight:bold;-webkit-text-stroke:0.35px #fff">Carriers</span>
<div style="left:297.5px;top:543.8px;width:609.5px;height:257.2px;background:#808080"></div>
<div style="left:297.5px;top:543.8px;width:579.5px;height:14.0px;background:linear-gradient(#f4f2e8,#ebe8d8);border-top:1px solid #fbfaf4;box-sizing:border-box"></div>
<div style="left:321.5px;top:545.8px;width:1px;height:10.0px;background:#c9c4ae"></div>
<div style="left:322.5px;top:545.8px;width:1px;height:10.0px;background:#faf9f2"></div>
<div style="left:358.0px;top:545.8px;width:1px;height:10.0px;background:#c9c4ae"></div>
<div style="left:359.0px;top:545.8px;width:1px;height:10.0px;background:#faf9f2"></div>
<span class="t" style="left:243.25px;width:200px;text-align:center;top:546.80px;font-size:8.5px;line-height:10px;color:#1c1c1c;transform:scaleX(0.85);transform-origin:50% 0;">Level</span>
<div style="left:385.2px;top:545.8px;width:1px;height:10.0px;background:#c9c4ae"></div>
<div style="left:386.2px;top:545.8px;width:1px;height:10.0px;background:#faf9f2"></div>
<span class="t" style="left:275.10px;width:200px;text-align:center;top:546.80px;font-size:8.5px;line-height:10px;color:#1c1c1c;transform:scaleX(0.85);transform-origin:50% 0;">Omit</span>
<div style="left:422.0px;top:545.8px;width:1px;height:10.0px;background:#c9c4ae"></div>
<div style="left:423.0px;top:545.8px;width:1px;height:10.0px;background:#faf9f2"></div>
<span class="t" style="left:307.10px;width:200px;text-align:center;top:546.80px;font-size:8.5px;line-height:10px;color:#1c1c1c;transform:scaleX(0.85);transform-origin:50% 0;">Division</span>
<div style="left:458.8px;top:545.8px;width:1px;height:10.0px;background:#c9c4ae"></div>
<div style="left:459.8px;top:545.8px;width:1px;height:10.0px;background:#faf9f2"></div>
<span class="t" style="left:343.90px;width:200px;text-align:center;top:546.80px;font-size:8.5px;line-height:10px;color:#1c1c1c;transform:scaleX(0.85);transform-origin:50% 0;">Tray</span>
<div style="left:496.3px;top:545.8px;width:1px;height:10.0px;background:#c9c4ae"></div>
<div style="left:497.3px;top:545.8px;width:1px;height:10.0px;background:#faf9f2"></div>
<span class="t" style="left:381.05px;width:200px;text-align:center;top:546.80px;font-size:8.5px;line-height:10px;color:#1c1c1c;transform:scaleX(0.85);transform-origin:50% 0;">Offset X</span>
<div style="left:534.2px;top:545.8px;width:1px;height:10.0px;background:#c9c4ae"></div>
<div style="left:535.2px;top:545.8px;width:1px;height:10.0px;background:#faf9f2"></div>
<span class="t" style="left:418.75px;width:200px;text-align:center;top:546.80px;font-size:8.5px;line-height:10px;color:#1c1c1c;transform:scaleX(0.85);transform-origin:50% 0;">Offset Y</span>
<div style="left:585.5px;top:545.8px;width:1px;height:10.0px;background:#c9c4ae"></div>
<div style="left:586.5px;top:545.8px;width:1px;height:10.0px;background:#faf9f2"></div>
<span class="t" style="left:463.35px;width:200px;text-align:center;top:546.80px;font-size:8.5px;line-height:10px;color:#1c1c1c;transform:scaleX(0.85);transform-origin:50% 0;">Component</span>
<div style="left:656.5px;top:545.8px;width:1px;height:10.0px;background:#c9c4ae"></div>
<div style="left:657.5px;top:545.8px;width:1px;height:10.0px;background:#faf9f2"></div>
<span class="t" style="left:524.50px;width:200px;text-align:center;top:546.80px;font-size:8.5px;line-height:10px;color:#1c1c1c;transform:scaleX(0.85);transform-origin:50% 0;">Fixed Component</span>
<div style="left:731.5px;top:545.8px;width:1px;height:10.0px;background:#c9c4ae"></div>
<div style="left:732.5px;top:545.8px;width:1px;height:10.0px;background:#faf9f2"></div>
<span class="t" style="left:597.50px;width:200px;text-align:center;top:546.80px;font-size:8.5px;line-height:10px;color:#1c1c1c;transform:scaleX(0.85);transform-origin:50% 0;">Component Shape</span>
<div style="left:766.8px;top:545.8px;width:1px;height:10.0px;background:#c9c4ae"></div>
<div style="left:767.8px;top:545.8px;width:1px;height:10.0px;background:#faf9f2"></div>
<span class="t" style="left:652.65px;width:200px;text-align:center;top:546.80px;font-size:8.5px;line-height:10px;color:#1c1c1c;transform:scaleX(0.85);transform-origin:50% 0;">X</span>
<div style="left:802.7px;top:545.8px;width:1px;height:10.0px;background:#c9c4ae"></div>
<div style="left:803.7px;top:545.8px;width:1px;height:10.0px;background:#faf9f2"></div>
<span class="t" style="left:688.25px;width:200px;text-align:center;top:546.80px;font-size:8.5px;line-height:10px;color:#1c1c1c;transform:scaleX(0.85);transform-origin:50% 0;">Y</span>
<div style="left:838.7px;top:545.8px;width:1px;height:10.0px;background:#c9c4ae"></div>
<div style="left:839.7px;top:545.8px;width:1px;height:10.0px;background:#faf9f2"></div>
<span class="t" style="left:724.20px;width:200px;text-align:center;top:546.80px;font-size:8.5px;line-height:10px;color:#1c1c1c;transform:scaleX(0.85);transform-origin:50% 0;">Z</span>
<span class="t" style="left:760.60px;width:200px;text-align:center;top:546.80px;font-size:8.5px;line-height:10px;color:#1c1c1c;transform:scaleX(0.85);transform-origin:50% 0;">Angle</span>
<div style="left:297.5px;top:556.8px;width:579.5px;height:1px;background:#d6d2bc"></div>
<div style="left:297.5px;top:557.8px;width:25.5px;height:14.8px;background:#ebe8d8"></div>
<div style="left:297.5px;top:571.5999999999999px;width:25.5px;height:1px;background:#c6c2ac"></div>
<div style="left:322px;top:557.8px;width:1px;height:14.8px;background:#bcb8a4"></div>
<div style="left:302.0px;top:560.8px;width:0;height:0;border-left:4px solid #000;border-top:3.5px solid transparent;border-bottom:3.5px solid transparent"></div>
<div style="left:323px;top:557.8px;width:554px;height:14.8px;background:#0a54e6"></div>
<div style="left:358.5px;top:557.8px;width:1px;height:14.8px;background:#84acf4"></div>
<div style="left:385.7px;top:557.8px;width:1px;height:14.8px;background:#84acf4"></div>
<div style="left:422.5px;top:557.8px;width:1px;height:14.8px;background:#84acf4"></div>
<div style="left:459.3px;top:557.8px;width:1px;height:14.8px;background:#84acf4"></div>
<div style="left:496.8px;top:557.8px;width:1px;height:14.8px;background:#84acf4"></div>
<div style="left:534.7px;top:557.8px;width:1px;height:14.8px;background:#84acf4"></div>
<div style="left:586px;top:557.8px;width:1px;height:14.8px;background:#84acf4"></div>
<div style="left:657px;top:557.8px;width:1px;height:14.8px;background:#84acf4"></div>
<div style="left:732px;top:557.8px;width:1px;height:14.8px;background:#84acf4"></div>
<div style="left:767.3px;top:557.8px;width:1px;height:14.8px;background:#84acf4"></div>
<div style="left:803.2px;top:557.8px;width:1px;height:14.8px;background:#84acf4"></div>
<div style="left:839.2px;top:557.8px;width:1px;height:14.8px;background:#84acf4"></div>
<div style="left:876px;top:557.8px;width:1px;height:14.8px;background:#84acf4"></div>
<div style="left:323px;top:570.5999999999999px;width:554px;height:1px;background:#0842c4"></div>
<div style="left:323px;top:571.5999999999999px;width:554px;height:1px;background:#e4ecfc"></div>
<span class="t" style="left:325.50px;top:561.00px;font-size:8.5px;line-height:10px;color:#fff;transform:scaleX(0.85);transform-origin:0 0;">1</span>
<div style="left:368.1px;top:559.8px;width:10px;height:10px;background:#fff"></div>
<span class="t" style="right:488.00px;top:561.00px;font-size:8.5px;line-height:10px;color:#9cb8f0;transform:scaleX(0.85);transform-origin:100% 0;-webkit-text-stroke:0">1</span>
<span class="t" style="right:413.20px;top:561.00px;font-size:8.5px;line-height:10px;color:#fff;transform:scaleX(0.85);transform-origin:100% 0;">0.000</span>
<span class="t" style="right:375.30px;top:561.00px;font-size:8.5px;line-height:10px;color:#fff;transform:scaleX(0.85);transform-origin:100% 0;">0.000</span>
<div style="left:617.5px;top:559.8px;width:10px;height:10px;background:#fff"></div>
<span class="t" style="right:142.70px;top:561.00px;font-size:8.5px;line-height:10px;color:#fff;transform:scaleX(0.85);transform-origin:100% 0;">0.000</span>
<span class="t" style="right:106.80px;top:561.00px;font-size:8.5px;line-height:10px;color:#fff;transform:scaleX(0.85);transform-origin:100% 0;">0.000</span>
<span class="t" style="right:70.80px;top:561.00px;font-size:8.5px;line-height:10px;color:#fff;transform:scaleX(0.85);transform-origin:100% 0;">0.000</span>
<span class="t" style="right:34.00px;top:561.00px;font-size:8.5px;line-height:10px;color:#fff;transform:scaleX(0.85);transform-origin:100% 0;">0.000</span>
<div style="left:2px;top:811.5px;width:905px;height:1.5px;background:#2a3850"></div>
<div style="left:2px;top:813px;width:905px;height:16px;background:#c4dbf8"></div>
<div style="left:0px;top:829px;width:908px;height:1px;background:#3a4250"></div>
<span class="t" style="left:4.40px;top:816.00px;font-size:8.5px;line-height:10px;color:#3a4878;transform:scaleX(0.975);transform-origin:0 0;">Notifications</span>
<div style="left:50.5px;top:813.5px;width:1.2px;height:13px;background:#34406a"></div>
<span class="t" style="left:56.00px;top:816.00px;font-size:8.5px;line-height:10px;color:#3a4878;transform:scaleX(0.905);transform-origin:0 0;">SetupDoku_ini_Demo JTF</span>
<div style="left:148px;top:811.5px;width:62px;height:17px;background:linear-gradient(#f6f7fb,#eceef6);border:1.2px solid #4a5878;border-top:none;box-sizing:border-box"></div>
<span class="t" style="left:152.20px;top:816.00px;font-size:8.5px;line-height:10px;color:#1a1a1a;transform:scaleX(0.9);transform-origin:0 0;">Tables on setup</span>
<span class="t" style="left:214.00px;top:816.00px;font-size:8.5px;line-height:10px;color:#3a4878;transform:scaleX(0.89);transform-origin:0 0;">Comments &amp; Links</span>
<div style="left:907px;top:0px;width:1px;height:357px;background:#c4c4c4"></div>
<div style="left:907px;top:458px;width:1px;height:372px;background:#c4c4c4"></div></body></html>
